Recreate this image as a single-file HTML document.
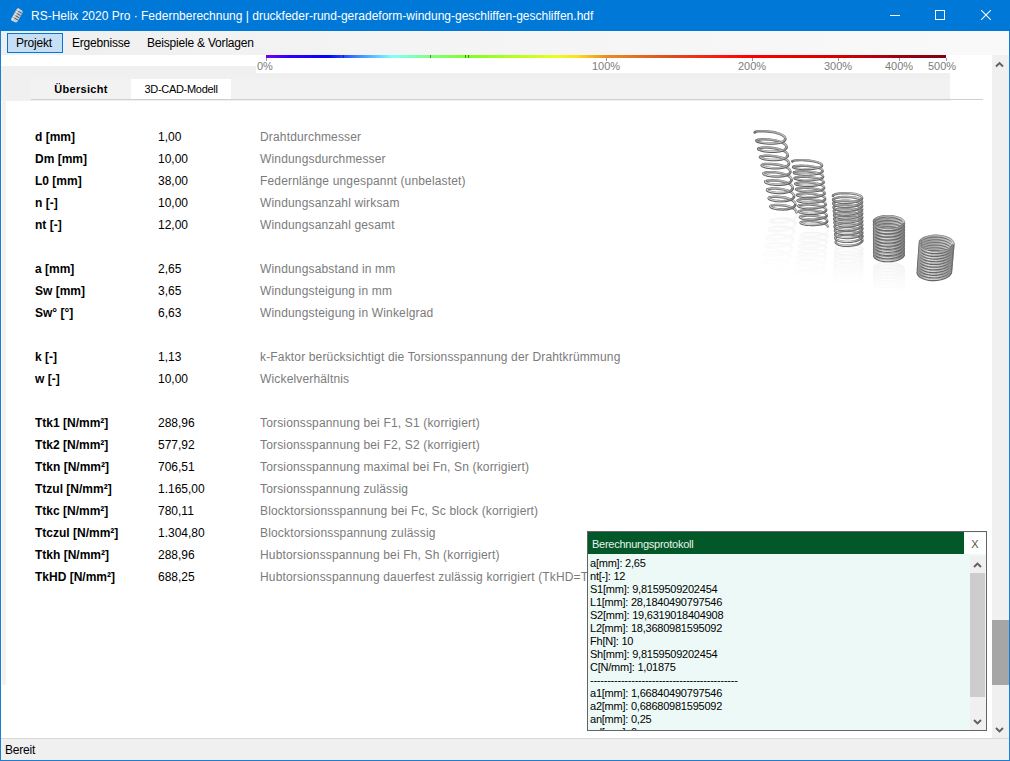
<!DOCTYPE html>
<html><head><meta charset="utf-8">
<style>
*{margin:0;padding:0;box-sizing:border-box}
html,body{width:1010px;height:761px;overflow:hidden;background:#fff;font-family:"Liberation Sans",sans-serif}
.a{position:absolute}
#title{left:0;top:0;width:1010px;height:31px;background:#0078d7;color:#fff;font-size:12px}
#title .t{left:31px;top:9px;white-space:nowrap;line-height:15px}
.menu{position:absolute;top:35px;font-size:12px;line-height:16px;white-space:nowrap;color:#000;letter-spacing:-0.2px}
.tab{position:absolute;top:79px;height:20px;font-size:11px;line-height:20px;text-align:center;white-space:nowrap;color:#000}
.r{position:absolute;font-size:12px;line-height:16px;white-space:nowrap}
.k{left:35px;font-weight:bold;color:#000}
.v{left:158px;color:#000}
.d{left:260px;color:#7b7b7b;letter-spacing:0.16px}
.lbl{position:absolute;top:60px;font-size:11px;line-height:13px;color:#7d7d7d;white-space:nowrap}
.tick{position:absolute;top:58px;width:1px;height:3px;background:#9a9a9a}
.btick{position:absolute;top:55px;width:1px;height:3px;background:rgba(0,0,0,.45)}
#proto{left:587px;top:531px;width:400px;height:200px;border:1px solid #646464;background:#edf9f6}
#ph{left:0;top:0;width:376px;height:22px;background:#03582a;color:#e8f4e8;font-size:11px;line-height:22px;padding-left:4px;padding-top:1px;letter-spacing:-0.25px}
#px{left:376px;top:1px;width:22px;height:21px;background:#fff;color:#555;font-size:11px;line-height:22px;text-align:center}
#pt{left:2px;top:25px;width:370px;height:173px;overflow:hidden;font-size:11px;line-height:13px;color:#000;letter-spacing:-0.23px}
#psb{left:382px;top:24px;width:15px;height:174px;background:#f0f0f0}
#status{left:1px;top:738px;width:1008px;height:22px;background:#f0f0f0;border-top:1px solid #d9d9d9}
.chev{position:absolute}
</style></head><body>
<div class="a" style="left:0;top:0;width:1010px;height:761px;border:1px solid #1a7fd4;border-top:none"></div>
<div id="title" class="a">
 <svg class="a" style="left:9px;top:7px" width="16" height="17" viewBox="0 0 16 17">
  <g transform="rotate(30 8 8.5)">
   <rect x="4.5" y="1.5" width="7" height="14" rx="2.5" fill="#c8ccd2"/>
   <path d="M4.8 4.2h6.4M4.8 6.8h6.4M4.8 9.4h6.4M4.8 12h6.4" stroke="#4a5a70" stroke-width="1"/>
   <rect x="5" y="1.5" width="2" height="14" fill="#eef0f4" opacity=".6"/>
  </g>
 </svg>
 <div class="t a">RS-Helix 2020 Pro · Federnberechnung | druckfeder-rund-geradeform-windung-geschliffen-geschliffen.hdf</div>
 <div class="a" style="left:890px;top:15px;width:10px;height:1px;background:#fff"></div>
 <div class="a" style="left:935px;top:10px;width:10px;height:10px;border:1px solid #fff"></div>
 <svg class="a" style="left:981px;top:10px" width="10" height="10" viewBox="0 0 10 10"><path d="M0 0L10 10M10 0L0 10" stroke="#fff" stroke-width="1.05"/></svg>
</div>
<div class="a" style="left:1px;top:31px;width:1008px;height:24px;background:linear-gradient(to right,#efefef,#f4f4f4 40%,#f9f9f9)"></div>
<div class="a" style="left:7px;top:33px;width:56px;height:20px;background:#c6dff5;border:1px solid #0078d7"></div>
<div class="menu" style="left:16px">Projekt</div>
<div class="menu" style="left:72px">Ergebnisse</div>
<div class="menu" style="left:147px">Beispiele &amp; Vorlagen</div>

<div class="a" style="left:1px;top:66px;width:949px;height:35px;background:#f0f0f0"></div>
<div class="a" style="left:31px;top:79px;width:919px;height:20px;background:#f2f2f2"></div>
<div class="a" style="left:256px;top:55px;width:700px;height:18px;background:#fff"></div>
<div class="a" style="left:2px;top:101px;width:4px;height:584px;background:#f2f2f2"></div>
<div class="tab" style="left:31px;width:100px;font-weight:bold;letter-spacing:0.28px">Übersicht</div>
<div class="tab" style="left:131px;width:100px;background:#fff;letter-spacing:-0.3px">3D-CAD-Modell</div>
<div class="a" style="left:31px;top:99px;width:952px;height:1px;background:#cfcfcf"></div>

<div class="a" style="left:266px;top:55px;width:680px;height:3px;background:linear-gradient(to right,#7a00e6 0px,#3300ff 20px,#0000ff 62px,#4080ff 90px,#80ffff 126px,#80ff80 164px,#80ff20 204px,#e8ff20 290px,#ffe020 310px,#e89020 340px,#e05020 400px,#ff1010 460px,#ff0000 486px,#d80000 572px,#a00010 633px,#800010 680px)"></div>
<div class="btick" style="left:343px"></div>
<div class="btick" style="left:430px"></div>
<div class="btick" style="left:465px"></div>
<div class="btick" style="left:468px"></div>
<div class="tick" style="left:266px"></div>
<div class="tick" style="left:606px"></div>
<div class="tick" style="left:752px"></div>
<div class="tick" style="left:838px"></div>
<div class="tick" style="left:899px"></div>
<div class="tick" style="left:946px"></div>
<div class="lbl" style="left:257px">0%</div>
<div class="lbl" style="left:592px">100%</div>
<div class="lbl" style="left:738px">200%</div>
<div class="lbl" style="left:824px">300%</div>
<div class="lbl" style="left:885px">400%</div>
<div class="lbl" style="left:928px">500%</div>

<div class="r k" style="top:129px">d [mm]</div><div class="r v" style="top:129px">1,00</div><div class="r d" style="top:129px">Drahtdurchmesser</div><div class="r k" style="top:151px">Dm [mm]</div><div class="r v" style="top:151px">10,00</div><div class="r d" style="top:151px">Windungsdurchmesser</div><div class="r k" style="top:173px">L0 [mm]</div><div class="r v" style="top:173px">38,00</div><div class="r d" style="top:173px">Federnlänge ungespannt (unbelastet)</div><div class="r k" style="top:195px">n [-]</div><div class="r v" style="top:195px">10,00</div><div class="r d" style="top:195px">Windungsanzahl wirksam</div><div class="r k" style="top:217px">nt [-]</div><div class="r v" style="top:217px">12,00</div><div class="r d" style="top:217px">Windungsanzahl gesamt</div><div class="r k" style="top:261px">a [mm]</div><div class="r v" style="top:261px">2,65</div><div class="r d" style="top:261px">Windungsabstand in mm</div><div class="r k" style="top:283px">Sw [mm]</div><div class="r v" style="top:283px">3,65</div><div class="r d" style="top:283px">Windungsteigung in mm</div><div class="r k" style="top:305px">Sw° [°]</div><div class="r v" style="top:305px">6,63</div><div class="r d" style="top:305px">Windungsteigung in Winkelgrad</div><div class="r k" style="top:349px">k [-]</div><div class="r v" style="top:349px">1,13</div><div class="r d" style="top:349px">k-Faktor berücksichtigt die Torsionsspannung der Drahtkrümmung</div><div class="r k" style="top:371px">w [-]</div><div class="r v" style="top:371px">10,00</div><div class="r d" style="top:371px">Wickelverhältnis</div><div class="r k" style="top:415px">Ttk1 [N/mm²]</div><div class="r v" style="top:415px">288,96</div><div class="r d" style="top:415px">Torsionsspannung bei F1, S1 (korrigiert)</div><div class="r k" style="top:437px">Ttk2 [N/mm²]</div><div class="r v" style="top:437px">577,92</div><div class="r d" style="top:437px">Torsionsspannung bei F2, S2 (korrigiert)</div><div class="r k" style="top:459px">Ttkn [N/mm²]</div><div class="r v" style="top:459px">706,51</div><div class="r d" style="top:459px">Torsionsspannung maximal bei Fn, Sn (korrigiert)</div><div class="r k" style="top:481px">Ttzul [N/mm²]</div><div class="r v" style="top:481px">1.165,00</div><div class="r d" style="top:481px">Torsionsspannung zulässig</div><div class="r k" style="top:503px">Ttkc [N/mm²]</div><div class="r v" style="top:503px">780,11</div><div class="r d" style="top:503px">Blocktorsionsspannung bei Fc, Sc block (korrigiert)</div><div class="r k" style="top:525px">Ttczul [N/mm²]</div><div class="r v" style="top:525px">1.304,80</div><div class="r d" style="top:525px">Blocktorsionsspannung zulässig</div><div class="r k" style="top:547px">Ttkh [N/mm²]</div><div class="r v" style="top:547px">288,96</div><div class="r d" style="top:547px">Hubtorsionsspannung bei Fh, Sh (korrigiert)</div><div class="r k" style="top:569px">TkHD [N/mm²]</div><div class="r v" style="top:569px">688,25</div><div class="r d" style="top:569px">Hubtorsionsspannung dauerfest zulässig korrigiert (TkHD=TkH*bl)</div>

<svg class="a" style="left:740px;top:115px" width="230" height="180" viewBox="0 0 230 180"><defs><linearGradient id="gf" x1="0" y1="0" x2="1" y2="0"><stop offset="0" stop-color="#8e8e8e"/><stop offset=".3" stop-color="#dcdcdc"/><stop offset=".6" stop-color="#c4c4c4"/><stop offset="1" stop-color="#808080"/></linearGradient><linearGradient id="gb" x1="0" y1="0" x2="1" y2="0"><stop offset="0" stop-color="#9a9a9a"/><stop offset=".5" stop-color="#b0b0b0"/><stop offset="1" stop-color="#d0d0d0"/></linearGradient><linearGradient id="fg" x1="0" y1="0" x2="0" y2="1"><stop offset="0" stop-color="#fff" stop-opacity="1"/><stop offset="1" stop-color="#fff" stop-opacity="0"/></linearGradient><mask id="m0" maskUnits="userSpaceOnUse" x="0" y="99" width="230" height="60"><rect x="0" y="99" width="230" height="60" fill="url(#fg)"/></mask><mask id="m1" maskUnits="userSpaceOnUse" x="0" y="114" width="230" height="50"><rect x="0" y="114" width="230" height="50" fill="url(#fg)"/></mask><mask id="m2" maskUnits="userSpaceOnUse" x="0" y="130" width="230" height="40"><rect x="0" y="130" width="230" height="40" fill="url(#fg)"/></mask><mask id="m3" maskUnits="userSpaceOnUse" x="0" y="147" width="230" height="30"><rect x="0" y="147" width="230" height="30" fill="url(#fg)"/></mask><mask id="m4" maskUnits="userSpaceOnUse" x="0" y="166" width="230" height="0"><rect x="0" y="166" width="230" height="0" fill="url(#fg)"/></mask></defs><g mask="url(#m0)" opacity=".09"><g transform="translate(0 198) scale(1 -1)"><path d="M15.00 17.07 L15.70 16.74 L16.84 16.47 L18.37 16.27 L20.24 16.16 L22.41 16.13 L24.80 16.21 L27.35 16.39 L29.97 16.68 L32.60 17.08 L35.15 17.59 L37.54 18.21 L39.71 18.94 L41.59 19.76 L43.13 20.67 L44.28 21.63 L45.01 22.64 L45.29 23.64 L45.12 24.62 M16.75 25.30 L17.45 24.96 L18.56 24.68 L20.07 24.48 L21.91 24.36 L24.04 24.34 L26.39 24.41 L28.90 24.58 L31.48 24.87 L34.06 25.27 L36.57 25.78 L38.92 26.40 L41.05 27.12 L42.90 27.94 L44.42 28.85 L45.55 29.82 L46.26 30.83 L46.54 31.84 L46.38 32.81 M18.50 33.52 L19.19 33.18 L20.29 32.90 L21.77 32.69 L23.58 32.57 L25.67 32.54 L27.99 32.60 L30.45 32.78 L32.99 33.06 L35.52 33.45 L37.99 33.96 L40.30 34.58 L42.40 35.30 L44.22 36.13 L45.70 37.04 L46.82 38.01 L47.52 39.02 L47.80 40.03 L47.64 41.01 M20.26 41.74 L20.93 41.40 L22.01 41.11 L23.47 40.90 L25.25 40.77 L27.31 40.74 L29.58 40.80 L32.00 40.97 L34.49 41.25 L36.99 41.64 L39.41 42.15 L41.68 42.76 L43.74 43.49 L45.53 44.31 L46.99 45.22 L48.09 46.19 L48.78 47.21 L49.05 48.22 L48.89 49.21 M22.01 49.97 L22.68 49.62 L23.74 49.33 L25.17 49.11 L26.92 48.98 L28.94 48.94 L31.17 49.00 L33.55 49.16 L36.00 49.44 L38.45 49.83 L40.83 50.33 L43.06 50.95 L45.09 51.67 L46.84 52.50 L48.28 53.41 L49.35 54.38 L50.04 55.39 L50.30 56.41 L50.15 57.41 M23.77 58.19 L24.42 57.84 L25.46 57.54 L26.86 57.32 L28.58 57.19 L30.57 57.14 L32.77 57.19 L35.10 57.36 L37.51 57.63 L39.91 58.01 L42.25 58.51 L44.44 59.13 L46.43 59.85 L48.16 60.68 L49.57 61.59 L50.62 62.57 L51.29 63.58 L51.56 64.61 L51.41 65.60 M25.52 66.42 L26.16 66.06 L27.19 65.76 L28.56 65.53 L30.25 65.39 L32.20 65.34 L34.36 65.39 L36.65 65.55 L39.01 65.82 L41.38 66.20 L43.67 66.70 L45.82 67.31 L47.78 68.04 L49.47 68.86 L50.86 69.78 L51.89 70.75 L52.55 71.77 L52.81 72.80 L52.66 73.80 M27.27 74.64 L27.90 74.28 L28.91 73.98 L30.26 73.74 L31.92 73.60 L33.84 73.54 L35.95 73.59 L38.20 73.74 L40.52 74.01 L42.84 74.39 L45.09 74.88 L47.20 75.50 L49.12 76.22 L50.78 77.05 L52.14 77.96 L53.16 78.94 L53.81 79.96 L54.06 80.99 L53.92 82.00 M29.03 82.87 L29.65 82.50 L30.63 82.19 L31.96 81.95 L33.59 81.80 L35.47 81.74 L37.54 81.78 L39.75 81.93 L42.03 82.20 L44.30 82.57 L46.51 83.07 L48.58 83.68 L50.46 84.40 L52.10 85.23 L53.43 86.14 L54.43 87.13 L55.06 88.15 L55.32 89.19 L55.18 90.19 M30.78 91.09 L31.39 90.72 L32.36 90.41 L33.66 90.17 L35.26 90.01 L37.10 89.94 L39.14 89.98 L41.30 90.13 L43.53 90.39 L45.76 90.76 L47.93 91.25 L49.96 91.86 L51.81 92.59 L53.41 93.41 L54.72 94.33 L55.70 95.32 L56.32 96.34 L56.57 97.38" fill="none" stroke="#747474" stroke-width="2.5" stroke-linecap="round"/><path d="M15.00 17.07 L15.70 16.74 L16.84 16.47 L18.37 16.27 L20.24 16.16 L22.41 16.13 L24.80 16.21 L27.35 16.39 L29.97 16.68 L32.60 17.08 L35.15 17.59 L37.54 18.21 L39.71 18.94 L41.59 19.76 L43.13 20.67 L44.28 21.63 L45.01 22.64 L45.29 23.64 L45.12 24.62 M16.75 25.30 L17.45 24.96 L18.56 24.68 L20.07 24.48 L21.91 24.36 L24.04 24.34 L26.39 24.41 L28.90 24.58 L31.48 24.87 L34.06 25.27 L36.57 25.78 L38.92 26.40 L41.05 27.12 L42.90 27.94 L44.42 28.85 L45.55 29.82 L46.26 30.83 L46.54 31.84 L46.38 32.81 M18.50 33.52 L19.19 33.18 L20.29 32.90 L21.77 32.69 L23.58 32.57 L25.67 32.54 L27.99 32.60 L30.45 32.78 L32.99 33.06 L35.52 33.45 L37.99 33.96 L40.30 34.58 L42.40 35.30 L44.22 36.13 L45.70 37.04 L46.82 38.01 L47.52 39.02 L47.80 40.03 L47.64 41.01 M20.26 41.74 L20.93 41.40 L22.01 41.11 L23.47 40.90 L25.25 40.77 L27.31 40.74 L29.58 40.80 L32.00 40.97 L34.49 41.25 L36.99 41.64 L39.41 42.15 L41.68 42.76 L43.74 43.49 L45.53 44.31 L46.99 45.22 L48.09 46.19 L48.78 47.21 L49.05 48.22 L48.89 49.21 M22.01 49.97 L22.68 49.62 L23.74 49.33 L25.17 49.11 L26.92 48.98 L28.94 48.94 L31.17 49.00 L33.55 49.16 L36.00 49.44 L38.45 49.83 L40.83 50.33 L43.06 50.95 L45.09 51.67 L46.84 52.50 L48.28 53.41 L49.35 54.38 L50.04 55.39 L50.30 56.41 L50.15 57.41 M23.77 58.19 L24.42 57.84 L25.46 57.54 L26.86 57.32 L28.58 57.19 L30.57 57.14 L32.77 57.19 L35.10 57.36 L37.51 57.63 L39.91 58.01 L42.25 58.51 L44.44 59.13 L46.43 59.85 L48.16 60.68 L49.57 61.59 L50.62 62.57 L51.29 63.58 L51.56 64.61 L51.41 65.60 M25.52 66.42 L26.16 66.06 L27.19 65.76 L28.56 65.53 L30.25 65.39 L32.20 65.34 L34.36 65.39 L36.65 65.55 L39.01 65.82 L41.38 66.20 L43.67 66.70 L45.82 67.31 L47.78 68.04 L49.47 68.86 L50.86 69.78 L51.89 70.75 L52.55 71.77 L52.81 72.80 L52.66 73.80 M27.27 74.64 L27.90 74.28 L28.91 73.98 L30.26 73.74 L31.92 73.60 L33.84 73.54 L35.95 73.59 L38.20 73.74 L40.52 74.01 L42.84 74.39 L45.09 74.88 L47.20 75.50 L49.12 76.22 L50.78 77.05 L52.14 77.96 L53.16 78.94 L53.81 79.96 L54.06 80.99 L53.92 82.00 M29.03 82.87 L29.65 82.50 L30.63 82.19 L31.96 81.95 L33.59 81.80 L35.47 81.74 L37.54 81.78 L39.75 81.93 L42.03 82.20 L44.30 82.57 L46.51 83.07 L48.58 83.68 L50.46 84.40 L52.10 85.23 L53.43 86.14 L54.43 87.13 L55.06 88.15 L55.32 89.19 L55.18 90.19 M30.78 91.09 L31.39 90.72 L32.36 90.41 L33.66 90.17 L35.26 90.01 L37.10 89.94 L39.14 89.98 L41.30 90.13 L43.53 90.39 L45.76 90.76 L47.93 91.25 L49.96 91.86 L51.81 92.59 L53.41 93.41 L54.72 94.33 L55.70 95.32 L56.32 96.34 L56.57 97.38" fill="none" stroke="url(#gb)" stroke-width="1.25" stroke-linecap="round" transform="translate(0 -0.3)"/><path d="M14.74 17.45 L15.00 17.07 M45.12 24.62 L44.51 25.53 L43.48 26.35 L42.05 27.05 L40.27 27.62 L38.20 28.05 L35.91 28.34 L33.46 28.51 L30.93 28.55 L28.40 28.48 L25.95 28.31 L23.66 28.06 L21.59 27.74 L19.80 27.36 L18.37 26.96 L17.31 26.53 L16.68 26.10 L16.49 25.68 L16.75 25.30 M46.38 32.81 L45.78 33.73 L44.76 34.55 L43.36 35.26 L41.61 35.83 L39.58 36.27 L37.33 36.57 L34.92 36.74 L32.43 36.78 L29.95 36.71 L27.54 36.54 L25.29 36.29 L23.25 35.97 L21.50 35.60 L20.09 35.19 L19.06 34.76 L18.44 34.33 L18.25 33.91 L18.50 33.52 M47.64 41.01 L47.05 41.93 L46.05 42.76 L44.67 43.47 L42.95 44.05 L40.96 44.49 L38.74 44.79 L36.38 44.96 L33.94 45.01 L31.50 44.95 L29.13 44.78 L26.92 44.53 L24.92 44.21 L23.20 43.84 L21.81 43.43 L20.80 43.00 L20.19 42.56 L20.01 42.14 L20.26 41.74 M48.89 49.21 L48.32 50.13 L47.33 50.96 L45.98 51.68 L44.30 52.26 L42.34 52.71 L40.16 53.02 L37.84 53.19 L35.44 53.24 L33.05 53.18 L30.72 53.02 L28.55 52.77 L26.58 52.45 L24.90 52.08 L23.53 51.66 L22.54 51.23 L21.94 50.79 L21.77 50.37 L22.01 49.97 M50.15 57.41 L49.58 58.33 L48.62 59.17 L47.29 59.89 L45.64 60.48 L43.71 60.93 L41.58 61.24 L39.30 61.42 L36.95 61.47 L34.59 61.41 L32.31 61.25 L30.18 61.01 L28.25 60.69 L26.59 60.31 L25.26 59.90 L24.28 59.47 L23.70 59.03 L23.52 58.59 L23.77 58.19 M51.41 65.60 L50.85 66.53 L49.91 67.37 L48.60 68.10 L46.98 68.69 L45.09 69.15 L43.00 69.47 L40.76 69.65 L38.45 69.71 L36.14 69.65 L33.90 69.49 L31.81 69.24 L29.92 68.93 L28.29 68.55 L26.98 68.14 L26.02 67.70 L25.45 67.26 L25.28 66.82 L25.52 66.42 M52.66 73.80 L52.12 74.74 L51.19 75.58 L49.91 76.31 L48.32 76.91 L46.47 77.37 L44.41 77.69 L42.22 77.88 L39.95 77.94 L37.69 77.88 L35.49 77.73 L33.44 77.48 L31.58 77.16 L29.99 76.79 L28.70 76.37 L27.76 75.93 L27.20 75.49 L27.04 75.05 L27.27 74.64 M53.92 82.00 L53.39 82.94 L52.48 83.79 L51.22 84.52 L49.66 85.12 L47.85 85.59 L45.83 85.91 L43.68 86.11 L41.46 86.17 L39.24 86.12 L37.08 85.96 L35.07 85.72 L33.25 85.40 L31.69 85.03 L30.42 84.61 L29.51 84.17 L28.96 83.72 L28.79 83.28 L29.03 82.87 M55.18 90.19 L54.66 91.14 L53.77 91.99 L52.54 92.73 L51.01 93.34 L49.23 93.81 L47.25 94.14 L45.14 94.33 L42.96 94.40 L40.78 94.35 L38.67 94.20 L36.70 93.96 L34.92 93.64 L33.38 93.26 L32.15 92.85 L31.25 92.40 L30.71 91.95 L30.55 91.51 L30.78 91.09" fill="none" stroke="#5e5e5e" stroke-width="2.5" stroke-linecap="round"/><path d="M14.74 17.45 L15.00 17.07 M45.12 24.62 L44.51 25.53 L43.48 26.35 L42.05 27.05 L40.27 27.62 L38.20 28.05 L35.91 28.34 L33.46 28.51 L30.93 28.55 L28.40 28.48 L25.95 28.31 L23.66 28.06 L21.59 27.74 L19.80 27.36 L18.37 26.96 L17.31 26.53 L16.68 26.10 L16.49 25.68 L16.75 25.30 M46.38 32.81 L45.78 33.73 L44.76 34.55 L43.36 35.26 L41.61 35.83 L39.58 36.27 L37.33 36.57 L34.92 36.74 L32.43 36.78 L29.95 36.71 L27.54 36.54 L25.29 36.29 L23.25 35.97 L21.50 35.60 L20.09 35.19 L19.06 34.76 L18.44 34.33 L18.25 33.91 L18.50 33.52 M47.64 41.01 L47.05 41.93 L46.05 42.76 L44.67 43.47 L42.95 44.05 L40.96 44.49 L38.74 44.79 L36.38 44.96 L33.94 45.01 L31.50 44.95 L29.13 44.78 L26.92 44.53 L24.92 44.21 L23.20 43.84 L21.81 43.43 L20.80 43.00 L20.19 42.56 L20.01 42.14 L20.26 41.74 M48.89 49.21 L48.32 50.13 L47.33 50.96 L45.98 51.68 L44.30 52.26 L42.34 52.71 L40.16 53.02 L37.84 53.19 L35.44 53.24 L33.05 53.18 L30.72 53.02 L28.55 52.77 L26.58 52.45 L24.90 52.08 L23.53 51.66 L22.54 51.23 L21.94 50.79 L21.77 50.37 L22.01 49.97 M50.15 57.41 L49.58 58.33 L48.62 59.17 L47.29 59.89 L45.64 60.48 L43.71 60.93 L41.58 61.24 L39.30 61.42 L36.95 61.47 L34.59 61.41 L32.31 61.25 L30.18 61.01 L28.25 60.69 L26.59 60.31 L25.26 59.90 L24.28 59.47 L23.70 59.03 L23.52 58.59 L23.77 58.19 M51.41 65.60 L50.85 66.53 L49.91 67.37 L48.60 68.10 L46.98 68.69 L45.09 69.15 L43.00 69.47 L40.76 69.65 L38.45 69.71 L36.14 69.65 L33.90 69.49 L31.81 69.24 L29.92 68.93 L28.29 68.55 L26.98 68.14 L26.02 67.70 L25.45 67.26 L25.28 66.82 L25.52 66.42 M52.66 73.80 L52.12 74.74 L51.19 75.58 L49.91 76.31 L48.32 76.91 L46.47 77.37 L44.41 77.69 L42.22 77.88 L39.95 77.94 L37.69 77.88 L35.49 77.73 L33.44 77.48 L31.58 77.16 L29.99 76.79 L28.70 76.37 L27.76 75.93 L27.20 75.49 L27.04 75.05 L27.27 74.64 M53.92 82.00 L53.39 82.94 L52.48 83.79 L51.22 84.52 L49.66 85.12 L47.85 85.59 L45.83 85.91 L43.68 86.11 L41.46 86.17 L39.24 86.12 L37.08 85.96 L35.07 85.72 L33.25 85.40 L31.69 85.03 L30.42 84.61 L29.51 84.17 L28.96 83.72 L28.79 83.28 L29.03 82.87 M55.18 90.19 L54.66 91.14 L53.77 91.99 L52.54 92.73 L51.01 93.34 L49.23 93.81 L47.25 94.14 L45.14 94.33 L42.96 94.40 L40.78 94.35 L38.67 94.20 L36.70 93.96 L34.92 93.64 L33.38 93.26 L32.15 92.85 L31.25 92.40 L30.71 91.95 L30.55 91.51 L30.78 91.09" fill="none" stroke="url(#gf)" stroke-width="1.25" stroke-linecap="round" transform="translate(0 -0.35)"/></g></g><g mask="url(#m1)" opacity=".09"><g transform="translate(0 228) scale(1 -1)"><path d="M52.55 46.15 L53.23 45.85 L54.34 45.60 L55.84 45.40 L57.67 45.26 L59.80 45.19 L62.15 45.21 L64.66 45.30 L67.24 45.48 L69.82 45.75 L72.32 46.10 L74.67 46.54 L76.80 47.04 L78.63 47.62 L80.12 48.25 L81.23 48.91 L81.91 49.60 L82.15 50.30 L81.94 50.98 M53.30 51.72 L53.98 51.41 L55.08 51.15 L56.56 50.95 L58.39 50.81 L60.50 50.74 L62.83 50.75 L65.31 50.84 L67.88 51.02 L70.44 51.29 L72.92 51.64 L75.25 52.08 L77.35 52.59 L79.17 53.16 L80.65 53.80 L81.75 54.47 L82.42 55.16 L82.66 55.86 L82.46 56.54 M54.06 57.28 L54.73 56.97 L55.82 56.71 L57.29 56.50 L59.10 56.36 L61.19 56.28 L63.51 56.29 L65.97 56.38 L68.51 56.56 L71.05 56.83 L73.51 57.18 L75.82 57.62 L77.91 58.13 L79.72 58.71 L81.18 59.34 L82.27 60.02 L82.94 60.72 L83.17 61.42 L82.97 62.11 M54.81 62.85 L55.48 62.53 L56.56 62.27 L58.02 62.05 L59.82 61.90 L61.89 61.83 L64.19 61.83 L66.63 61.92 L69.15 62.10 L71.66 62.37 L74.11 62.72 L76.40 63.16 L78.47 63.67 L80.26 64.25 L81.71 64.89 L82.79 65.57 L83.45 66.27 L83.69 66.98 L83.48 67.67 M55.57 68.41 L56.23 68.09 L57.30 67.82 L58.75 67.60 L60.53 67.45 L62.59 67.37 L64.86 67.38 L67.29 67.46 L69.78 67.64 L72.28 67.91 L74.70 68.26 L76.97 68.70 L79.03 69.21 L80.80 69.80 L82.24 70.44 L83.31 71.12 L83.97 71.83 L84.20 72.54 L84.00 73.24 M56.32 73.98 L56.98 73.65 L58.04 73.38 L59.48 73.16 L61.24 73.00 L63.28 72.92 L65.54 72.92 L67.94 73.00 L70.42 73.18 L72.89 73.44 L75.29 73.80 L77.55 74.24 L79.58 74.76 L81.34 75.35 L82.77 75.99 L83.83 76.68 L84.48 77.39 L84.71 78.10 L84.51 78.80 M56.85 79.90 L57.08 79.54 L57.73 79.22 L58.78 78.93 L60.21 78.71 L61.96 78.55 L63.98 78.46 L66.22 78.46 L68.60 78.54 L71.05 78.72 L73.51 78.98 L75.89 79.34 L78.12 79.78 L80.14 80.30 L81.88 80.89 L83.30 81.54 L84.35 82.23 L85.00 82.94 L85.23 83.66 L85.03 84.37 M57.83 85.11 L58.48 84.78 L59.52 84.49 L60.94 84.26 L62.67 84.10 L64.68 84.01 L66.89 84.00 L69.26 84.08 L71.69 84.26 L74.12 84.52 L76.48 84.88 L78.70 85.32 L80.70 85.84 L82.43 86.44 L83.83 87.09 L84.87 87.78 L85.51 88.50 L85.74 89.22 L85.54 89.93 M58.59 90.67 L59.23 90.34 L60.26 90.05 L61.66 89.81 L63.38 89.64 L65.37 89.55 L67.57 89.54 L69.91 89.62 L72.33 89.80 L74.74 90.06 L77.08 90.42 L79.27 90.86 L81.25 91.38 L82.97 91.98 L84.36 92.63 L85.39 93.33 L86.03 94.06 L86.25 94.78 L86.06 95.50 M59.34 96.24 L59.98 95.90 L61.01 95.60 L62.39 95.36 L64.10 95.19 L66.07 95.10 L68.25 95.09 L70.57 95.16 L72.96 95.34 L75.35 95.60 L77.67 95.96 L79.85 96.40 L81.81 96.93 L83.51 97.53 L84.89 98.18 L85.91 98.88 L86.54 99.61 L86.77 100.35 L86.57 101.07 M60.10 101.80 L60.73 101.46 L61.75 101.16 L63.12 100.91 L64.81 100.74 L66.77 100.64 L68.93 100.63 L71.23 100.70 L73.60 100.87 L75.97 101.14 L78.26 101.50 L80.42 101.94 L82.37 102.47 L84.05 103.07 L85.42 103.73 L86.43 104.44 L87.06 105.17 L87.28 105.91 L87.09 106.63 M60.85 107.37 L61.48 107.02 L62.49 106.71 L63.85 106.47 L65.52 106.29 L67.46 106.19 L69.60 106.17 L71.88 106.25 L74.23 106.41 L76.58 106.68 L78.86 107.03 L80.99 107.48 L82.93 108.01 L84.60 108.62 L85.95 109.28 L86.95 109.99 L87.57 110.73 L87.79 111.47" fill="none" stroke="#747474" stroke-width="2.3" stroke-linecap="round"/><path d="M52.55 46.15 L53.23 45.85 L54.34 45.60 L55.84 45.40 L57.67 45.26 L59.80 45.19 L62.15 45.21 L64.66 45.30 L67.24 45.48 L69.82 45.75 L72.32 46.10 L74.67 46.54 L76.80 47.04 L78.63 47.62 L80.12 48.25 L81.23 48.91 L81.91 49.60 L82.15 50.30 L81.94 50.98 M53.30 51.72 L53.98 51.41 L55.08 51.15 L56.56 50.95 L58.39 50.81 L60.50 50.74 L62.83 50.75 L65.31 50.84 L67.88 51.02 L70.44 51.29 L72.92 51.64 L75.25 52.08 L77.35 52.59 L79.17 53.16 L80.65 53.80 L81.75 54.47 L82.42 55.16 L82.66 55.86 L82.46 56.54 M54.06 57.28 L54.73 56.97 L55.82 56.71 L57.29 56.50 L59.10 56.36 L61.19 56.28 L63.51 56.29 L65.97 56.38 L68.51 56.56 L71.05 56.83 L73.51 57.18 L75.82 57.62 L77.91 58.13 L79.72 58.71 L81.18 59.34 L82.27 60.02 L82.94 60.72 L83.17 61.42 L82.97 62.11 M54.81 62.85 L55.48 62.53 L56.56 62.27 L58.02 62.05 L59.82 61.90 L61.89 61.83 L64.19 61.83 L66.63 61.92 L69.15 62.10 L71.66 62.37 L74.11 62.72 L76.40 63.16 L78.47 63.67 L80.26 64.25 L81.71 64.89 L82.79 65.57 L83.45 66.27 L83.69 66.98 L83.48 67.67 M55.57 68.41 L56.23 68.09 L57.30 67.82 L58.75 67.60 L60.53 67.45 L62.59 67.37 L64.86 67.38 L67.29 67.46 L69.78 67.64 L72.28 67.91 L74.70 68.26 L76.97 68.70 L79.03 69.21 L80.80 69.80 L82.24 70.44 L83.31 71.12 L83.97 71.83 L84.20 72.54 L84.00 73.24 M56.32 73.98 L56.98 73.65 L58.04 73.38 L59.48 73.16 L61.24 73.00 L63.28 72.92 L65.54 72.92 L67.94 73.00 L70.42 73.18 L72.89 73.44 L75.29 73.80 L77.55 74.24 L79.58 74.76 L81.34 75.35 L82.77 75.99 L83.83 76.68 L84.48 77.39 L84.71 78.10 L84.51 78.80 M56.85 79.90 L57.08 79.54 L57.73 79.22 L58.78 78.93 L60.21 78.71 L61.96 78.55 L63.98 78.46 L66.22 78.46 L68.60 78.54 L71.05 78.72 L73.51 78.98 L75.89 79.34 L78.12 79.78 L80.14 80.30 L81.88 80.89 L83.30 81.54 L84.35 82.23 L85.00 82.94 L85.23 83.66 L85.03 84.37 M57.83 85.11 L58.48 84.78 L59.52 84.49 L60.94 84.26 L62.67 84.10 L64.68 84.01 L66.89 84.00 L69.26 84.08 L71.69 84.26 L74.12 84.52 L76.48 84.88 L78.70 85.32 L80.70 85.84 L82.43 86.44 L83.83 87.09 L84.87 87.78 L85.51 88.50 L85.74 89.22 L85.54 89.93 M58.59 90.67 L59.23 90.34 L60.26 90.05 L61.66 89.81 L63.38 89.64 L65.37 89.55 L67.57 89.54 L69.91 89.62 L72.33 89.80 L74.74 90.06 L77.08 90.42 L79.27 90.86 L81.25 91.38 L82.97 91.98 L84.36 92.63 L85.39 93.33 L86.03 94.06 L86.25 94.78 L86.06 95.50 M59.34 96.24 L59.98 95.90 L61.01 95.60 L62.39 95.36 L64.10 95.19 L66.07 95.10 L68.25 95.09 L70.57 95.16 L72.96 95.34 L75.35 95.60 L77.67 95.96 L79.85 96.40 L81.81 96.93 L83.51 97.53 L84.89 98.18 L85.91 98.88 L86.54 99.61 L86.77 100.35 L86.57 101.07 M60.10 101.80 L60.73 101.46 L61.75 101.16 L63.12 100.91 L64.81 100.74 L66.77 100.64 L68.93 100.63 L71.23 100.70 L73.60 100.87 L75.97 101.14 L78.26 101.50 L80.42 101.94 L82.37 102.47 L84.05 103.07 L85.42 103.73 L86.43 104.44 L87.06 105.17 L87.28 105.91 L87.09 106.63 M60.85 107.37 L61.48 107.02 L62.49 106.71 L63.85 106.47 L65.52 106.29 L67.46 106.19 L69.60 106.17 L71.88 106.25 L74.23 106.41 L76.58 106.68 L78.86 107.03 L80.99 107.48 L82.93 108.01 L84.60 108.62 L85.95 109.28 L86.95 109.99 L87.57 110.73 L87.79 111.47" fill="none" stroke="url(#gb)" stroke-width="1.15" stroke-linecap="round" transform="translate(0 -0.3)"/><path d="M52.31 46.48 L52.55 46.15 M81.94 50.98 L81.29 51.62 L80.23 52.21 L78.77 52.74 L76.97 53.19 L74.89 53.56 L72.59 53.83 L70.13 54.01 L67.59 54.10 L65.06 54.11 L62.60 54.03 L60.30 53.88 L58.22 53.66 L56.43 53.40 L54.98 53.09 L53.92 52.75 L53.27 52.40 L53.07 52.05 L53.30 51.72 M82.46 56.54 L81.81 57.19 L80.75 57.79 L79.31 58.32 L77.53 58.77 L75.47 59.14 L73.18 59.42 L70.74 59.60 L68.23 59.69 L65.72 59.70 L63.28 59.62 L61.00 59.47 L58.94 59.25 L57.16 58.98 L55.72 58.67 L54.67 58.33 L54.03 57.98 L53.82 57.62 L54.06 57.28 M82.97 62.11 L82.33 62.76 L81.28 63.36 L79.85 63.90 L78.09 64.36 L76.04 64.73 L73.77 65.01 L71.35 65.19 L68.86 65.29 L66.37 65.29 L63.96 65.21 L61.69 65.06 L59.65 64.84 L57.89 64.57 L56.46 64.25 L55.41 63.91 L54.78 63.55 L54.58 63.19 L54.81 62.85 M83.48 67.67 L82.85 68.33 L81.81 68.94 L80.39 69.48 L78.64 69.94 L76.61 70.31 L74.36 70.60 L71.97 70.78 L69.50 70.88 L67.03 70.88 L64.63 70.80 L62.39 70.65 L60.36 70.43 L58.61 70.15 L57.20 69.83 L56.16 69.49 L55.54 69.13 L55.33 68.76 L55.57 68.41 M84.00 73.24 L83.37 73.90 L82.34 74.51 L80.94 75.06 L79.20 75.52 L77.18 75.90 L74.96 76.18 L72.58 76.37 L70.13 76.47 L67.68 76.47 L65.31 76.39 L63.08 76.24 L61.07 76.01 L59.34 75.74 L57.94 75.42 L56.91 75.07 L56.29 74.70 L56.09 74.33 L56.32 73.98 M84.51 78.80 L83.89 79.47 L82.87 80.09 L81.48 80.64 L79.75 81.10 L77.76 81.49 L75.55 81.77 L73.19 81.96 L70.76 82.06 L68.34 82.06 L65.98 81.98 L63.78 81.83 L61.78 81.60 L60.07 81.32 L58.68 81.00 L57.66 80.64 L57.04 80.27 L56.85 79.90 M85.03 84.37 L84.41 85.04 L83.40 85.66 L82.02 86.21 L80.31 86.69 L78.33 87.07 L76.14 87.36 L73.81 87.55 L71.40 87.65 L68.99 87.66 L66.66 87.57 L64.47 87.42 L62.50 87.19 L60.80 86.91 L59.42 86.58 L58.41 86.22 L57.80 85.85 L57.60 85.47 L57.83 85.11 M85.54 89.93 L84.93 90.61 L83.93 91.24 L82.56 91.79 L80.87 92.27 L78.90 92.66 L76.73 92.95 L74.42 93.14 L72.03 93.24 L69.65 93.25 L67.33 93.17 L65.17 93.01 L63.21 92.78 L61.52 92.49 L60.16 92.16 L59.16 91.80 L58.55 91.42 L58.36 91.04 L58.59 90.67 M86.06 95.50 L85.45 96.18 L84.46 96.81 L83.10 97.37 L81.42 97.85 L79.48 98.24 L77.32 98.54 L75.03 98.73 L72.67 98.83 L70.30 98.84 L68.01 98.76 L65.86 98.60 L63.92 98.37 L62.25 98.08 L60.90 97.74 L59.91 97.38 L59.31 97.00 L59.12 96.61 L59.34 96.24 M86.57 101.07 L85.97 101.75 L84.99 102.38 L83.64 102.95 L81.98 103.43 L80.05 103.83 L77.92 104.13 L75.64 104.32 L73.30 104.42 L70.96 104.43 L68.68 104.35 L66.56 104.19 L64.63 103.95 L62.98 103.66 L61.64 103.33 L60.66 102.96 L60.06 102.57 L59.87 102.18 L60.10 101.80 M87.09 106.63 L86.49 107.32 L85.52 107.96 L84.18 108.53 L82.53 109.02 L80.62 109.41 L78.51 109.71 L76.26 109.91 L73.93 110.02 L71.61 110.02 L69.36 109.94 L67.25 109.78 L65.35 109.54 L63.71 109.25 L62.38 108.91 L61.41 108.54 L60.82 108.14 L60.63 107.75 L60.85 107.37" fill="none" stroke="#5e5e5e" stroke-width="2.3" stroke-linecap="round"/><path d="M52.31 46.48 L52.55 46.15 M81.94 50.98 L81.29 51.62 L80.23 52.21 L78.77 52.74 L76.97 53.19 L74.89 53.56 L72.59 53.83 L70.13 54.01 L67.59 54.10 L65.06 54.11 L62.60 54.03 L60.30 53.88 L58.22 53.66 L56.43 53.40 L54.98 53.09 L53.92 52.75 L53.27 52.40 L53.07 52.05 L53.30 51.72 M82.46 56.54 L81.81 57.19 L80.75 57.79 L79.31 58.32 L77.53 58.77 L75.47 59.14 L73.18 59.42 L70.74 59.60 L68.23 59.69 L65.72 59.70 L63.28 59.62 L61.00 59.47 L58.94 59.25 L57.16 58.98 L55.72 58.67 L54.67 58.33 L54.03 57.98 L53.82 57.62 L54.06 57.28 M82.97 62.11 L82.33 62.76 L81.28 63.36 L79.85 63.90 L78.09 64.36 L76.04 64.73 L73.77 65.01 L71.35 65.19 L68.86 65.29 L66.37 65.29 L63.96 65.21 L61.69 65.06 L59.65 64.84 L57.89 64.57 L56.46 64.25 L55.41 63.91 L54.78 63.55 L54.58 63.19 L54.81 62.85 M83.48 67.67 L82.85 68.33 L81.81 68.94 L80.39 69.48 L78.64 69.94 L76.61 70.31 L74.36 70.60 L71.97 70.78 L69.50 70.88 L67.03 70.88 L64.63 70.80 L62.39 70.65 L60.36 70.43 L58.61 70.15 L57.20 69.83 L56.16 69.49 L55.54 69.13 L55.33 68.76 L55.57 68.41 M84.00 73.24 L83.37 73.90 L82.34 74.51 L80.94 75.06 L79.20 75.52 L77.18 75.90 L74.96 76.18 L72.58 76.37 L70.13 76.47 L67.68 76.47 L65.31 76.39 L63.08 76.24 L61.07 76.01 L59.34 75.74 L57.94 75.42 L56.91 75.07 L56.29 74.70 L56.09 74.33 L56.32 73.98 M84.51 78.80 L83.89 79.47 L82.87 80.09 L81.48 80.64 L79.75 81.10 L77.76 81.49 L75.55 81.77 L73.19 81.96 L70.76 82.06 L68.34 82.06 L65.98 81.98 L63.78 81.83 L61.78 81.60 L60.07 81.32 L58.68 81.00 L57.66 80.64 L57.04 80.27 L56.85 79.90 M85.03 84.37 L84.41 85.04 L83.40 85.66 L82.02 86.21 L80.31 86.69 L78.33 87.07 L76.14 87.36 L73.81 87.55 L71.40 87.65 L68.99 87.66 L66.66 87.57 L64.47 87.42 L62.50 87.19 L60.80 86.91 L59.42 86.58 L58.41 86.22 L57.80 85.85 L57.60 85.47 L57.83 85.11 M85.54 89.93 L84.93 90.61 L83.93 91.24 L82.56 91.79 L80.87 92.27 L78.90 92.66 L76.73 92.95 L74.42 93.14 L72.03 93.24 L69.65 93.25 L67.33 93.17 L65.17 93.01 L63.21 92.78 L61.52 92.49 L60.16 92.16 L59.16 91.80 L58.55 91.42 L58.36 91.04 L58.59 90.67 M86.06 95.50 L85.45 96.18 L84.46 96.81 L83.10 97.37 L81.42 97.85 L79.48 98.24 L77.32 98.54 L75.03 98.73 L72.67 98.83 L70.30 98.84 L68.01 98.76 L65.86 98.60 L63.92 98.37 L62.25 98.08 L60.90 97.74 L59.91 97.38 L59.31 97.00 L59.12 96.61 L59.34 96.24 M86.57 101.07 L85.97 101.75 L84.99 102.38 L83.64 102.95 L81.98 103.43 L80.05 103.83 L77.92 104.13 L75.64 104.32 L73.30 104.42 L70.96 104.43 L68.68 104.35 L66.56 104.19 L64.63 103.95 L62.98 103.66 L61.64 103.33 L60.66 102.96 L60.06 102.57 L59.87 102.18 L60.10 101.80 M87.09 106.63 L86.49 107.32 L85.52 107.96 L84.18 108.53 L82.53 109.02 L80.62 109.41 L78.51 109.71 L76.26 109.91 L73.93 110.02 L71.61 110.02 L69.36 109.94 L67.25 109.78 L65.35 109.54 L63.71 109.25 L62.38 108.91 L61.41 108.54 L60.82 108.14 L60.63 107.75 L60.85 107.37" fill="none" stroke="url(#gf)" stroke-width="1.15" stroke-linecap="round" transform="translate(0 -0.35)"/></g></g><g mask="url(#m2)" opacity=".09"><g transform="translate(0 260) scale(1 -1)"><path d="M93.12 80.46 L93.78 79.94 L94.86 79.46 L96.32 79.04 L98.12 78.68 L100.21 78.41 L102.52 78.23 L104.98 78.16 L107.51 78.19 L110.05 78.34 L112.51 78.60 L114.81 78.97 L116.90 79.45 L118.70 80.01 L120.16 80.66 L121.23 81.38 L121.89 82.13 L122.11 82.92 L121.89 83.70 M93.35 84.28 L94.00 83.75 L95.07 83.26 L96.52 82.82 L98.31 82.45 L100.38 82.17 L102.68 81.99 L105.12 81.91 L107.64 81.94 L110.16 82.09 L112.60 82.36 L114.89 82.73 L116.96 83.22 L118.75 83.79 L120.20 84.46 L121.26 85.18 L121.92 85.95 L122.14 86.75 L121.92 87.55 M93.57 88.10 L94.22 87.55 L95.28 87.05 L96.72 86.60 L98.50 86.22 L100.56 85.93 L102.84 85.74 L105.26 85.66 L107.76 85.69 L110.26 85.84 L112.69 86.11 L114.96 86.49 L117.02 86.99 L118.79 87.57 L120.23 88.25 L121.29 88.99 L121.94 89.77 L122.16 90.58 L121.95 91.40 M93.79 91.92 L94.44 91.36 L95.49 90.84 L96.93 90.38 L98.69 89.99 L100.73 89.70 L102.99 89.50 L105.40 89.41 L107.89 89.44 L110.37 89.60 L112.78 89.87 L115.04 90.26 L117.08 90.76 L118.84 91.35 L120.27 92.04 L121.32 92.79 L121.97 93.59 L122.19 94.42 L121.97 95.24 M94.02 95.74 L94.66 95.16 L95.71 94.63 L97.13 94.16 L98.88 93.76 L100.91 93.46 L103.15 93.25 L105.55 93.16 L108.01 93.19 L110.48 93.35 L112.87 93.62 L115.11 94.02 L117.14 94.52 L118.89 95.13 L120.31 95.83 L121.36 96.60 L122.00 97.41 L122.21 98.25 L122.00 99.09 M94.24 99.56 L94.88 98.97 L95.92 98.42 L97.33 97.94 L99.07 97.53 L101.08 97.22 L103.31 97.01 L105.69 96.92 L108.14 96.94 L110.59 97.10 L112.96 97.38 L115.19 97.78 L117.20 98.29 L118.94 98.91 L120.35 99.62 L121.39 100.40 L122.02 101.23 L122.24 102.08 L122.03 102.94 M94.25 104.00 L94.46 103.37 L95.10 102.77 L96.13 102.21 L97.53 101.72 L99.26 101.30 L101.26 100.98 L103.47 100.76 L105.83 100.67 L108.26 100.69 L110.70 100.85 L113.05 101.13 L115.26 101.54 L117.26 102.06 L118.99 102.69 L120.39 103.41 L121.42 104.21 L122.05 105.05 L122.26 105.92 L122.05 106.79 M94.69 107.19 L95.32 106.58 L96.34 106.01 L97.73 105.50 L99.45 105.07 L101.43 104.74 L103.63 104.52 L105.97 104.42 L108.39 104.44 L110.80 104.60 L113.14 104.89 L115.34 105.30 L117.32 105.83 L119.04 106.47 L120.43 107.21 L121.45 108.01 L122.08 108.87 L122.29 109.75 L122.08 110.64 M94.70 111.67 L94.91 111.01 L95.53 110.38 L96.55 109.80 L97.93 109.28 L99.64 108.84 L101.61 108.50 L103.79 108.27 L106.12 108.17 L108.51 108.19 L110.91 108.35 L113.23 108.64 L115.41 109.06 L117.38 109.60 L119.09 110.25 L120.46 111.00 L121.48 111.82 L122.10 112.69 L122.31 113.58 M95.13 114.83 L95.75 114.19 L96.76 113.59 L98.14 113.06 L99.83 112.61 L101.78 112.26 L103.95 112.03 L106.26 111.92 L108.64 111.94 L111.02 112.10 L113.33 112.40 L115.49 112.82 L117.45 113.37 L119.13 114.03 L120.50 114.79 L121.51 115.62 L122.13 116.50 L122.34 117.42 L122.13 118.33 M95.15 119.33 L95.36 118.65 L95.97 117.99 L96.98 117.38 L98.34 116.84 L100.01 116.38 L101.96 116.02 L104.11 115.78 L106.40 115.67 L108.76 115.69 L111.13 115.85 L113.42 116.15 L115.56 116.58 L117.51 117.14 L119.18 117.81 L120.54 118.58 L121.54 119.42 L122.16 120.32 L122.36 121.25 M95.58 122.47 L96.19 121.80 L97.19 121.17 L98.54 120.62 L100.20 120.15 L102.13 119.78 L104.27 119.54 L106.54 119.42 L108.89 119.44 L111.23 119.61 L113.51 119.91 L115.64 120.35 L117.57 120.91 L119.23 121.59 L120.58 122.37 L121.57 123.23 L122.18 124.14 L122.39 125.08 L122.18 126.03 M95.60 127.00" fill="none" stroke="#747474" stroke-width="2.4" stroke-linecap="round"/><path d="M93.12 80.46 L93.78 79.94 L94.86 79.46 L96.32 79.04 L98.12 78.68 L100.21 78.41 L102.52 78.23 L104.98 78.16 L107.51 78.19 L110.05 78.34 L112.51 78.60 L114.81 78.97 L116.90 79.45 L118.70 80.01 L120.16 80.66 L121.23 81.38 L121.89 82.13 L122.11 82.92 L121.89 83.70 M93.35 84.28 L94.00 83.75 L95.07 83.26 L96.52 82.82 L98.31 82.45 L100.38 82.17 L102.68 81.99 L105.12 81.91 L107.64 81.94 L110.16 82.09 L112.60 82.36 L114.89 82.73 L116.96 83.22 L118.75 83.79 L120.20 84.46 L121.26 85.18 L121.92 85.95 L122.14 86.75 L121.92 87.55 M93.57 88.10 L94.22 87.55 L95.28 87.05 L96.72 86.60 L98.50 86.22 L100.56 85.93 L102.84 85.74 L105.26 85.66 L107.76 85.69 L110.26 85.84 L112.69 86.11 L114.96 86.49 L117.02 86.99 L118.79 87.57 L120.23 88.25 L121.29 88.99 L121.94 89.77 L122.16 90.58 L121.95 91.40 M93.79 91.92 L94.44 91.36 L95.49 90.84 L96.93 90.38 L98.69 89.99 L100.73 89.70 L102.99 89.50 L105.40 89.41 L107.89 89.44 L110.37 89.60 L112.78 89.87 L115.04 90.26 L117.08 90.76 L118.84 91.35 L120.27 92.04 L121.32 92.79 L121.97 93.59 L122.19 94.42 L121.97 95.24 M94.02 95.74 L94.66 95.16 L95.71 94.63 L97.13 94.16 L98.88 93.76 L100.91 93.46 L103.15 93.25 L105.55 93.16 L108.01 93.19 L110.48 93.35 L112.87 93.62 L115.11 94.02 L117.14 94.52 L118.89 95.13 L120.31 95.83 L121.36 96.60 L122.00 97.41 L122.21 98.25 L122.00 99.09 M94.24 99.56 L94.88 98.97 L95.92 98.42 L97.33 97.94 L99.07 97.53 L101.08 97.22 L103.31 97.01 L105.69 96.92 L108.14 96.94 L110.59 97.10 L112.96 97.38 L115.19 97.78 L117.20 98.29 L118.94 98.91 L120.35 99.62 L121.39 100.40 L122.02 101.23 L122.24 102.08 L122.03 102.94 M94.25 104.00 L94.46 103.37 L95.10 102.77 L96.13 102.21 L97.53 101.72 L99.26 101.30 L101.26 100.98 L103.47 100.76 L105.83 100.67 L108.26 100.69 L110.70 100.85 L113.05 101.13 L115.26 101.54 L117.26 102.06 L118.99 102.69 L120.39 103.41 L121.42 104.21 L122.05 105.05 L122.26 105.92 L122.05 106.79 M94.69 107.19 L95.32 106.58 L96.34 106.01 L97.73 105.50 L99.45 105.07 L101.43 104.74 L103.63 104.52 L105.97 104.42 L108.39 104.44 L110.80 104.60 L113.14 104.89 L115.34 105.30 L117.32 105.83 L119.04 106.47 L120.43 107.21 L121.45 108.01 L122.08 108.87 L122.29 109.75 L122.08 110.64 M94.70 111.67 L94.91 111.01 L95.53 110.38 L96.55 109.80 L97.93 109.28 L99.64 108.84 L101.61 108.50 L103.79 108.27 L106.12 108.17 L108.51 108.19 L110.91 108.35 L113.23 108.64 L115.41 109.06 L117.38 109.60 L119.09 110.25 L120.46 111.00 L121.48 111.82 L122.10 112.69 L122.31 113.58 M95.13 114.83 L95.75 114.19 L96.76 113.59 L98.14 113.06 L99.83 112.61 L101.78 112.26 L103.95 112.03 L106.26 111.92 L108.64 111.94 L111.02 112.10 L113.33 112.40 L115.49 112.82 L117.45 113.37 L119.13 114.03 L120.50 114.79 L121.51 115.62 L122.13 116.50 L122.34 117.42 L122.13 118.33 M95.15 119.33 L95.36 118.65 L95.97 117.99 L96.98 117.38 L98.34 116.84 L100.01 116.38 L101.96 116.02 L104.11 115.78 L106.40 115.67 L108.76 115.69 L111.13 115.85 L113.42 116.15 L115.56 116.58 L117.51 117.14 L119.18 117.81 L120.54 118.58 L121.54 119.42 L122.16 120.32 L122.36 121.25 M95.58 122.47 L96.19 121.80 L97.19 121.17 L98.54 120.62 L100.20 120.15 L102.13 119.78 L104.27 119.54 L106.54 119.42 L108.89 119.44 L111.23 119.61 L113.51 119.91 L115.64 120.35 L117.57 120.91 L119.23 121.59 L120.58 122.37 L121.57 123.23 L122.18 124.14 L122.39 125.08 L122.18 126.03 M95.60 127.00" fill="none" stroke="url(#gb)" stroke-width="1.20" stroke-linecap="round" transform="translate(0 -0.3)"/><path d="M92.90 81.00 L93.12 80.46 M121.89 83.70 L121.24 84.46 L120.17 85.18 L118.72 85.84 L116.93 86.42 L114.86 86.90 L112.57 87.28 L110.13 87.55 L107.61 87.71 L105.10 87.74 L102.66 87.67 L100.37 87.49 L98.30 87.21 L96.51 86.84 L95.06 86.41 L94.00 85.92 L93.34 85.39 L93.12 84.83 L93.35 84.28 M121.92 87.55 L121.27 88.33 L120.21 89.06 L118.77 89.73 L116.99 90.32 L114.94 90.81 L112.66 91.20 L110.24 91.47 L107.74 91.62 L105.24 91.66 L102.81 91.58 L100.54 91.39 L98.49 91.11 L96.71 90.73 L95.28 90.28 L94.22 89.78 L93.57 89.23 L93.35 88.67 L93.57 88.10 M121.95 91.40 L121.30 92.19 L120.25 92.93 L118.82 93.62 L117.05 94.21 L115.01 94.72 L112.75 95.11 L110.34 95.38 L107.86 95.54 L105.38 95.57 L102.97 95.49 L100.72 95.30 L98.68 95.00 L96.92 94.62 L95.49 94.16 L94.44 93.64 L93.79 93.08 L93.58 92.50 L93.79 91.92 M121.97 95.24 L121.33 96.05 L120.28 96.81 L118.86 97.50 L117.11 98.11 L115.09 98.62 L112.84 99.02 L110.45 99.30 L107.99 99.46 L105.52 99.49 L103.13 99.40 L100.89 99.20 L98.87 98.90 L97.12 98.51 L95.70 98.03 L94.65 97.50 L94.01 96.93 L93.80 96.33 L94.02 95.74 M122.00 99.09 L121.36 99.91 L120.32 100.68 L118.91 101.39 L117.17 102.01 L115.16 102.53 L112.93 102.93 L110.56 103.21 L108.11 103.37 L105.66 103.40 L103.29 103.31 L101.07 103.11 L99.05 102.80 L97.32 102.39 L95.91 101.91 L94.87 101.36 L94.24 100.78 L94.02 100.17 L94.24 99.56 M122.03 102.94 L121.39 103.77 L120.36 104.56 L118.96 105.28 L117.23 105.91 L115.24 106.43 L113.02 106.84 L110.67 107.13 L108.24 107.29 L105.81 107.32 L103.45 107.23 L101.24 107.01 L99.24 106.69 L97.52 106.28 L96.12 105.78 L95.09 105.23 L94.46 104.63 L94.25 104.00 M122.05 106.79 L121.42 107.63 L120.40 108.43 L119.01 109.16 L117.30 109.80 L115.31 110.34 L113.11 110.75 L110.77 111.05 L108.36 111.21 L105.95 111.24 L103.61 111.14 L101.42 110.92 L99.43 110.59 L97.72 110.17 L96.33 109.66 L95.31 109.09 L94.69 108.47 L94.48 107.83 L94.69 107.19 M122.08 110.64 L121.46 111.50 L120.44 112.31 L119.06 113.05 L117.36 113.70 L115.39 114.24 L113.21 114.67 L110.88 114.96 L108.49 115.12 L106.09 115.15 L103.77 115.05 L101.59 114.82 L99.62 114.49 L97.92 114.05 L96.55 113.53 L95.53 112.95 L94.91 112.32 L94.70 111.67 M122.31 113.58 L122.11 114.48 L121.49 115.36 L120.48 116.18 L119.11 116.94 L117.42 117.60 L115.46 118.15 L113.30 118.58 L110.99 118.88 L108.61 119.04 L106.23 119.07 L103.93 118.96 L101.77 118.73 L99.81 118.39 L98.13 117.94 L96.76 117.41 L95.75 116.81 L95.13 116.17 L94.92 115.50 L95.13 114.83 M122.13 118.33 L121.52 119.22 L120.52 120.06 L119.15 120.82 L117.48 121.49 L115.54 122.05 L113.39 122.49 L111.10 122.79 L108.74 122.96 L106.38 122.98 L104.09 122.87 L101.94 122.64 L100.00 122.28 L98.33 121.83 L96.97 121.28 L95.97 120.67 L95.36 120.02 L95.15 119.33 M122.36 121.25 L122.16 122.18 L121.55 123.08 L120.55 123.93 L119.20 124.71 L117.54 125.39 L115.61 125.96 L113.48 126.40 L111.21 126.71 L108.86 126.87 L106.52 126.90 L104.25 126.78 L102.12 126.54 L100.19 126.18 L98.53 125.71 L97.18 125.16 L96.19 124.54 L95.58 123.86 L95.38 123.17 L95.58 122.47 M122.18 126.03 L121.58 126.94 L120.59 127.81 L119.25 128.60 L117.60 129.29 L115.69 129.87 L113.57 130.31 L111.31 130.62 L108.99 130.79 L106.66 130.81 L104.41 130.70 L102.29 130.45 L100.38 130.08 L98.73 129.60 L97.39 129.03 L96.41 128.40 L95.80 127.71 L95.60 127.00" fill="none" stroke="#666666" stroke-width="2.4" stroke-linecap="round"/><path d="M92.90 81.00 L93.12 80.46 M121.89 83.70 L121.24 84.46 L120.17 85.18 L118.72 85.84 L116.93 86.42 L114.86 86.90 L112.57 87.28 L110.13 87.55 L107.61 87.71 L105.10 87.74 L102.66 87.67 L100.37 87.49 L98.30 87.21 L96.51 86.84 L95.06 86.41 L94.00 85.92 L93.34 85.39 L93.12 84.83 L93.35 84.28 M121.92 87.55 L121.27 88.33 L120.21 89.06 L118.77 89.73 L116.99 90.32 L114.94 90.81 L112.66 91.20 L110.24 91.47 L107.74 91.62 L105.24 91.66 L102.81 91.58 L100.54 91.39 L98.49 91.11 L96.71 90.73 L95.28 90.28 L94.22 89.78 L93.57 89.23 L93.35 88.67 L93.57 88.10 M121.95 91.40 L121.30 92.19 L120.25 92.93 L118.82 93.62 L117.05 94.21 L115.01 94.72 L112.75 95.11 L110.34 95.38 L107.86 95.54 L105.38 95.57 L102.97 95.49 L100.72 95.30 L98.68 95.00 L96.92 94.62 L95.49 94.16 L94.44 93.64 L93.79 93.08 L93.58 92.50 L93.79 91.92 M121.97 95.24 L121.33 96.05 L120.28 96.81 L118.86 97.50 L117.11 98.11 L115.09 98.62 L112.84 99.02 L110.45 99.30 L107.99 99.46 L105.52 99.49 L103.13 99.40 L100.89 99.20 L98.87 98.90 L97.12 98.51 L95.70 98.03 L94.65 97.50 L94.01 96.93 L93.80 96.33 L94.02 95.74 M122.00 99.09 L121.36 99.91 L120.32 100.68 L118.91 101.39 L117.17 102.01 L115.16 102.53 L112.93 102.93 L110.56 103.21 L108.11 103.37 L105.66 103.40 L103.29 103.31 L101.07 103.11 L99.05 102.80 L97.32 102.39 L95.91 101.91 L94.87 101.36 L94.24 100.78 L94.02 100.17 L94.24 99.56 M122.03 102.94 L121.39 103.77 L120.36 104.56 L118.96 105.28 L117.23 105.91 L115.24 106.43 L113.02 106.84 L110.67 107.13 L108.24 107.29 L105.81 107.32 L103.45 107.23 L101.24 107.01 L99.24 106.69 L97.52 106.28 L96.12 105.78 L95.09 105.23 L94.46 104.63 L94.25 104.00 M122.05 106.79 L121.42 107.63 L120.40 108.43 L119.01 109.16 L117.30 109.80 L115.31 110.34 L113.11 110.75 L110.77 111.05 L108.36 111.21 L105.95 111.24 L103.61 111.14 L101.42 110.92 L99.43 110.59 L97.72 110.17 L96.33 109.66 L95.31 109.09 L94.69 108.47 L94.48 107.83 L94.69 107.19 M122.08 110.64 L121.46 111.50 L120.44 112.31 L119.06 113.05 L117.36 113.70 L115.39 114.24 L113.21 114.67 L110.88 114.96 L108.49 115.12 L106.09 115.15 L103.77 115.05 L101.59 114.82 L99.62 114.49 L97.92 114.05 L96.55 113.53 L95.53 112.95 L94.91 112.32 L94.70 111.67 M122.31 113.58 L122.11 114.48 L121.49 115.36 L120.48 116.18 L119.11 116.94 L117.42 117.60 L115.46 118.15 L113.30 118.58 L110.99 118.88 L108.61 119.04 L106.23 119.07 L103.93 118.96 L101.77 118.73 L99.81 118.39 L98.13 117.94 L96.76 117.41 L95.75 116.81 L95.13 116.17 L94.92 115.50 L95.13 114.83 M122.13 118.33 L121.52 119.22 L120.52 120.06 L119.15 120.82 L117.48 121.49 L115.54 122.05 L113.39 122.49 L111.10 122.79 L108.74 122.96 L106.38 122.98 L104.09 122.87 L101.94 122.64 L100.00 122.28 L98.33 121.83 L96.97 121.28 L95.97 120.67 L95.36 120.02 L95.15 119.33 M122.36 121.25 L122.16 122.18 L121.55 123.08 L120.55 123.93 L119.20 124.71 L117.54 125.39 L115.61 125.96 L113.48 126.40 L111.21 126.71 L108.86 126.87 L106.52 126.90 L104.25 126.78 L102.12 126.54 L100.19 126.18 L98.53 125.71 L97.18 125.16 L96.19 124.54 L95.58 123.86 L95.38 123.17 L95.58 122.47 M122.18 126.03 L121.58 126.94 L120.59 127.81 L119.25 128.60 L117.60 129.29 L115.69 129.87 L113.57 130.31 L111.31 130.62 L108.99 130.79 L106.66 130.81 L104.41 130.70 L102.29 130.45 L100.38 130.08 L98.73 129.60 L97.39 129.03 L96.41 128.40 L95.80 127.71 L95.60 127.00" fill="none" stroke="url(#gf)" stroke-width="1.20" stroke-linecap="round" transform="translate(0 -0.35)"/></g></g><g mask="url(#m3)" opacity=".09"><g transform="translate(0 294) scale(1 -1)"><path d="M134.43 105.56 L135.09 104.65 L136.18 103.81 L137.66 103.05 L139.49 102.41 L141.60 101.90 L143.94 101.55 L146.43 101.37 L149.00 101.37 L151.57 101.54 L154.06 101.89 L156.40 102.41 L158.51 103.09 L160.33 103.90 L161.81 104.83 L162.90 105.85 L163.57 106.93 L163.79 108.05 L163.57 109.16 M134.44 108.65 L135.11 107.73 L136.20 106.88 L137.68 106.12 L139.50 105.48 L141.61 104.97 L143.95 104.62 L146.43 104.43 L149.00 104.43 L151.57 104.60 L154.05 104.96 L156.39 105.48 L158.50 106.16 L160.32 106.98 L161.79 107.91 L162.88 108.93 L163.55 110.02 L163.77 111.14 L163.55 112.25 M134.46 111.73 L135.13 110.82 L136.22 109.96 L137.69 109.20 L139.51 108.55 L141.62 108.04 L143.95 107.68 L146.44 107.50 L149.00 107.49 L151.56 107.67 L154.05 108.02 L156.38 108.55 L158.49 109.23 L160.30 110.05 L161.78 110.99 L162.87 112.01 L163.53 113.11 L163.75 114.23 L163.53 115.35 M134.48 114.82 L135.14 113.90 L136.23 113.04 L137.71 112.27 L139.52 111.62 L141.63 111.10 L143.96 110.75 L146.44 110.56 L149.00 110.56 L151.56 110.73 L154.04 111.09 L156.37 111.61 L158.47 112.30 L160.29 113.12 L161.76 114.06 L162.85 115.10 L163.51 116.19 L163.74 117.32 L163.51 118.45 M134.50 117.91 L135.16 116.98 L136.25 116.12 L137.72 115.34 L139.54 114.69 L141.64 114.17 L143.96 113.81 L146.44 113.63 L149.00 113.62 L151.56 113.80 L154.04 114.15 L156.36 114.68 L158.46 115.37 L160.28 116.20 L161.75 117.14 L162.83 118.18 L163.50 119.28 L163.72 120.41 L163.49 121.54 M134.51 120.99 L135.18 120.06 L136.26 119.19 L137.73 118.42 L139.55 117.76 L141.65 117.24 L143.97 116.88 L146.45 116.69 L149.00 116.68 L151.55 116.86 L154.03 117.22 L156.35 117.75 L158.45 118.44 L160.26 119.27 L161.73 120.22 L162.81 121.26 L163.48 122.36 L163.70 123.50 L163.48 124.64 M134.53 124.08 L135.20 123.14 L136.28 122.27 L137.75 121.49 L139.56 120.83 L141.66 120.31 L143.98 119.94 L146.45 119.75 L149.00 119.75 L151.55 119.93 L154.02 120.28 L156.34 120.82 L158.44 121.51 L160.25 122.34 L161.72 123.30 L162.80 124.34 L163.46 125.45 L163.68 126.59 L163.46 127.73 M134.55 127.16 L135.21 126.22 L136.29 125.35 L137.76 124.56 L139.57 123.90 L141.67 123.37 L143.98 123.01 L146.45 122.82 L149.00 122.81 L151.55 122.99 L154.02 123.35 L156.33 123.88 L158.43 124.58 L160.23 125.42 L161.70 126.37 L162.78 127.42 L163.44 128.54 L163.66 129.68 L163.44 130.83 M134.57 130.25 L135.23 129.31 L136.31 128.42 L137.78 127.64 L139.58 126.97 L141.67 126.44 L143.99 126.07 L146.46 125.88 L149.00 125.88 L151.54 126.05 L154.01 126.41 L156.32 126.95 L158.42 127.65 L160.22 128.49 L161.68 129.45 L162.76 130.50 L163.42 131.62 L163.65 132.77 L163.42 133.92 M134.59 133.34 L135.25 132.39 L136.33 131.50 L137.79 130.71 L139.59 130.04 L141.68 129.51 L144.00 129.14 L146.46 128.95 L149.00 128.94 L151.54 129.12 L154.00 129.48 L156.32 130.02 L158.40 130.72 L160.21 131.56 L161.67 132.53 L162.75 133.59 L163.41 134.71 L163.63 135.86 L163.40 137.02 M134.60 136.42 L135.26 135.47 L136.34 134.58 L137.80 133.78 L139.61 133.11 L141.69 132.57 L144.00 132.20 L146.46 132.01 L149.00 132.00 L151.54 132.18 L154.00 132.55 L156.31 133.09 L158.39 133.79 L160.19 134.64 L161.65 135.60 L162.73 136.67 L163.39 137.79 L163.61 138.95 L163.39 140.11" fill="none" stroke="#747474" stroke-width="2.9" stroke-linecap="round"/><path d="M134.43 105.56 L135.09 104.65 L136.18 103.81 L137.66 103.05 L139.49 102.41 L141.60 101.90 L143.94 101.55 L146.43 101.37 L149.00 101.37 L151.57 101.54 L154.06 101.89 L156.40 102.41 L158.51 103.09 L160.33 103.90 L161.81 104.83 L162.90 105.85 L163.57 106.93 L163.79 108.05 L163.57 109.16 M134.44 108.65 L135.11 107.73 L136.20 106.88 L137.68 106.12 L139.50 105.48 L141.61 104.97 L143.95 104.62 L146.43 104.43 L149.00 104.43 L151.57 104.60 L154.05 104.96 L156.39 105.48 L158.50 106.16 L160.32 106.98 L161.79 107.91 L162.88 108.93 L163.55 110.02 L163.77 111.14 L163.55 112.25 M134.46 111.73 L135.13 110.82 L136.22 109.96 L137.69 109.20 L139.51 108.55 L141.62 108.04 L143.95 107.68 L146.44 107.50 L149.00 107.49 L151.56 107.67 L154.05 108.02 L156.38 108.55 L158.49 109.23 L160.30 110.05 L161.78 110.99 L162.87 112.01 L163.53 113.11 L163.75 114.23 L163.53 115.35 M134.48 114.82 L135.14 113.90 L136.23 113.04 L137.71 112.27 L139.52 111.62 L141.63 111.10 L143.96 110.75 L146.44 110.56 L149.00 110.56 L151.56 110.73 L154.04 111.09 L156.37 111.61 L158.47 112.30 L160.29 113.12 L161.76 114.06 L162.85 115.10 L163.51 116.19 L163.74 117.32 L163.51 118.45 M134.50 117.91 L135.16 116.98 L136.25 116.12 L137.72 115.34 L139.54 114.69 L141.64 114.17 L143.96 113.81 L146.44 113.63 L149.00 113.62 L151.56 113.80 L154.04 114.15 L156.36 114.68 L158.46 115.37 L160.28 116.20 L161.75 117.14 L162.83 118.18 L163.50 119.28 L163.72 120.41 L163.49 121.54 M134.51 120.99 L135.18 120.06 L136.26 119.19 L137.73 118.42 L139.55 117.76 L141.65 117.24 L143.97 116.88 L146.45 116.69 L149.00 116.68 L151.55 116.86 L154.03 117.22 L156.35 117.75 L158.45 118.44 L160.26 119.27 L161.73 120.22 L162.81 121.26 L163.48 122.36 L163.70 123.50 L163.48 124.64 M134.53 124.08 L135.20 123.14 L136.28 122.27 L137.75 121.49 L139.56 120.83 L141.66 120.31 L143.98 119.94 L146.45 119.75 L149.00 119.75 L151.55 119.93 L154.02 120.28 L156.34 120.82 L158.44 121.51 L160.25 122.34 L161.72 123.30 L162.80 124.34 L163.46 125.45 L163.68 126.59 L163.46 127.73 M134.55 127.16 L135.21 126.22 L136.29 125.35 L137.76 124.56 L139.57 123.90 L141.67 123.37 L143.98 123.01 L146.45 122.82 L149.00 122.81 L151.55 122.99 L154.02 123.35 L156.33 123.88 L158.43 124.58 L160.23 125.42 L161.70 126.37 L162.78 127.42 L163.44 128.54 L163.66 129.68 L163.44 130.83 M134.57 130.25 L135.23 129.31 L136.31 128.42 L137.78 127.64 L139.58 126.97 L141.67 126.44 L143.99 126.07 L146.46 125.88 L149.00 125.88 L151.54 126.05 L154.01 126.41 L156.32 126.95 L158.42 127.65 L160.22 128.49 L161.68 129.45 L162.76 130.50 L163.42 131.62 L163.65 132.77 L163.42 133.92 M134.59 133.34 L135.25 132.39 L136.33 131.50 L137.79 130.71 L139.59 130.04 L141.68 129.51 L144.00 129.14 L146.46 128.95 L149.00 128.94 L151.54 129.12 L154.00 129.48 L156.32 130.02 L158.40 130.72 L160.21 131.56 L161.67 132.53 L162.75 133.59 L163.41 134.71 L163.63 135.86 L163.40 137.02 M134.60 136.42 L135.26 135.47 L136.34 134.58 L137.80 133.78 L139.61 133.11 L141.69 132.57 L144.00 132.20 L146.46 132.01 L149.00 132.00 L151.54 132.18 L154.00 132.55 L156.31 133.09 L158.39 133.79 L160.19 134.64 L161.65 135.60 L162.73 136.67 L163.39 137.79 L163.61 138.95 L163.39 140.11" fill="none" stroke="url(#gb)" stroke-width="1.45" stroke-linecap="round" transform="translate(0 -0.3)"/><path d="M134.20 106.50 L134.43 105.56 M163.57 109.16 L162.90 110.24 L161.81 111.26 L160.33 112.19 L158.51 113.01 L156.39 113.69 L154.06 114.21 L151.57 114.56 L149.00 114.74 L146.43 114.74 L143.94 114.55 L141.61 114.20 L139.50 113.70 L137.67 113.06 L136.20 112.30 L135.11 111.45 L134.44 110.53 L134.22 109.59 L134.44 108.65 M163.55 112.25 L162.88 113.34 L161.79 114.37 L160.32 115.30 L158.49 116.12 L156.38 116.80 L154.05 117.32 L151.56 117.68 L149.00 117.86 L146.44 117.85 L143.95 117.67 L141.62 117.32 L139.51 116.81 L137.69 116.16 L136.21 115.40 L135.13 114.55 L134.46 113.63 L134.24 112.68 L134.46 111.73 M163.53 115.35 L162.86 116.44 L161.78 117.47 L160.30 118.41 L158.48 119.23 L156.38 119.91 L154.05 120.44 L151.56 120.80 L149.00 120.97 L146.44 120.97 L143.96 120.79 L141.63 120.43 L139.52 119.92 L137.70 119.27 L136.23 118.50 L135.14 117.65 L134.48 116.73 L134.25 115.77 L134.48 114.82 M163.51 118.45 L162.85 119.54 L161.76 120.57 L160.29 121.52 L158.47 122.34 L156.37 123.03 L154.04 123.56 L151.56 123.92 L149.00 124.09 L146.44 124.09 L143.96 123.90 L141.63 123.55 L139.53 123.03 L137.72 122.38 L136.24 121.61 L135.16 120.75 L134.50 119.82 L134.27 118.86 L134.50 117.91 M163.49 121.54 L162.83 122.64 L161.75 123.68 L160.27 124.63 L158.46 125.45 L156.36 126.14 L154.03 126.67 L151.56 127.03 L149.00 127.21 L146.45 127.21 L143.97 127.02 L141.64 126.66 L139.54 126.15 L137.73 125.49 L136.26 124.71 L135.18 123.85 L134.51 122.92 L134.29 121.95 L134.51 120.99 M163.48 124.64 L162.81 125.74 L161.73 126.78 L160.26 127.73 L158.45 128.57 L156.35 129.26 L154.03 129.79 L151.55 130.15 L149.00 130.33 L146.45 130.32 L143.97 130.14 L141.65 129.78 L139.56 129.26 L137.74 128.60 L136.28 127.82 L135.19 126.95 L134.53 126.01 L134.31 125.05 L134.53 124.08 M163.46 127.73 L162.80 128.84 L161.71 129.89 L160.25 130.84 L158.44 131.68 L156.34 132.37 L154.02 132.91 L151.55 133.27 L149.00 133.45 L146.45 133.44 L143.98 133.25 L141.66 132.89 L139.57 132.37 L137.76 131.71 L136.29 130.92 L135.21 130.05 L134.55 129.11 L134.33 128.14 L134.55 127.16 M163.44 130.83 L162.78 131.94 L161.70 132.99 L160.23 133.95 L158.42 134.79 L156.33 135.49 L154.01 136.02 L151.55 136.39 L149.00 136.57 L146.45 136.56 L143.99 136.37 L141.67 136.01 L139.58 135.48 L137.77 134.81 L136.31 134.03 L135.23 133.15 L134.57 132.20 L134.35 131.23 L134.57 130.25 M163.42 133.92 L162.76 135.04 L161.68 136.10 L160.22 137.06 L158.41 137.90 L156.32 138.60 L154.01 139.14 L151.54 139.50 L149.00 139.68 L146.46 139.68 L143.99 139.49 L141.68 139.12 L139.59 138.59 L137.79 137.92 L136.32 137.13 L135.25 136.25 L134.59 135.30 L134.36 134.32 L134.59 133.34 M163.40 137.02 L162.74 138.14 L161.67 139.20 L160.20 140.17 L158.40 141.01 L156.31 141.72 L154.00 142.26 L151.54 142.62 L149.00 142.80 L146.46 142.80 L144.00 142.60 L141.69 142.24 L139.60 141.71 L137.80 141.03 L136.34 140.24 L135.26 139.35 L134.60 138.39 L134.38 137.41 L134.60 136.42 M163.39 140.11 L162.73 141.24 L161.65 142.31 L160.19 143.28 L158.39 144.13 L156.30 144.83 L154.00 145.37 L151.54 145.74 L149.00 145.92 L146.46 145.91 L144.01 145.72 L141.70 145.35 L139.61 144.82 L137.81 144.14 L136.35 143.34 L135.28 142.45 L134.62 141.49 L134.40 140.50" fill="none" stroke="#666666" stroke-width="2.9" stroke-linecap="round"/><path d="M134.20 106.50 L134.43 105.56 M163.57 109.16 L162.90 110.24 L161.81 111.26 L160.33 112.19 L158.51 113.01 L156.39 113.69 L154.06 114.21 L151.57 114.56 L149.00 114.74 L146.43 114.74 L143.94 114.55 L141.61 114.20 L139.50 113.70 L137.67 113.06 L136.20 112.30 L135.11 111.45 L134.44 110.53 L134.22 109.59 L134.44 108.65 M163.55 112.25 L162.88 113.34 L161.79 114.37 L160.32 115.30 L158.49 116.12 L156.38 116.80 L154.05 117.32 L151.56 117.68 L149.00 117.86 L146.44 117.85 L143.95 117.67 L141.62 117.32 L139.51 116.81 L137.69 116.16 L136.21 115.40 L135.13 114.55 L134.46 113.63 L134.24 112.68 L134.46 111.73 M163.53 115.35 L162.86 116.44 L161.78 117.47 L160.30 118.41 L158.48 119.23 L156.38 119.91 L154.05 120.44 L151.56 120.80 L149.00 120.97 L146.44 120.97 L143.96 120.79 L141.63 120.43 L139.52 119.92 L137.70 119.27 L136.23 118.50 L135.14 117.65 L134.48 116.73 L134.25 115.77 L134.48 114.82 M163.51 118.45 L162.85 119.54 L161.76 120.57 L160.29 121.52 L158.47 122.34 L156.37 123.03 L154.04 123.56 L151.56 123.92 L149.00 124.09 L146.44 124.09 L143.96 123.90 L141.63 123.55 L139.53 123.03 L137.72 122.38 L136.24 121.61 L135.16 120.75 L134.50 119.82 L134.27 118.86 L134.50 117.91 M163.49 121.54 L162.83 122.64 L161.75 123.68 L160.27 124.63 L158.46 125.45 L156.36 126.14 L154.03 126.67 L151.56 127.03 L149.00 127.21 L146.45 127.21 L143.97 127.02 L141.64 126.66 L139.54 126.15 L137.73 125.49 L136.26 124.71 L135.18 123.85 L134.51 122.92 L134.29 121.95 L134.51 120.99 M163.48 124.64 L162.81 125.74 L161.73 126.78 L160.26 127.73 L158.45 128.57 L156.35 129.26 L154.03 129.79 L151.55 130.15 L149.00 130.33 L146.45 130.32 L143.97 130.14 L141.65 129.78 L139.56 129.26 L137.74 128.60 L136.28 127.82 L135.19 126.95 L134.53 126.01 L134.31 125.05 L134.53 124.08 M163.46 127.73 L162.80 128.84 L161.71 129.89 L160.25 130.84 L158.44 131.68 L156.34 132.37 L154.02 132.91 L151.55 133.27 L149.00 133.45 L146.45 133.44 L143.98 133.25 L141.66 132.89 L139.57 132.37 L137.76 131.71 L136.29 130.92 L135.21 130.05 L134.55 129.11 L134.33 128.14 L134.55 127.16 M163.44 130.83 L162.78 131.94 L161.70 132.99 L160.23 133.95 L158.42 134.79 L156.33 135.49 L154.01 136.02 L151.55 136.39 L149.00 136.57 L146.45 136.56 L143.99 136.37 L141.67 136.01 L139.58 135.48 L137.77 134.81 L136.31 134.03 L135.23 133.15 L134.57 132.20 L134.35 131.23 L134.57 130.25 M163.42 133.92 L162.76 135.04 L161.68 136.10 L160.22 137.06 L158.41 137.90 L156.32 138.60 L154.01 139.14 L151.54 139.50 L149.00 139.68 L146.46 139.68 L143.99 139.49 L141.68 139.12 L139.59 138.59 L137.79 137.92 L136.32 137.13 L135.25 136.25 L134.59 135.30 L134.36 134.32 L134.59 133.34 M163.40 137.02 L162.74 138.14 L161.67 139.20 L160.20 140.17 L158.40 141.01 L156.31 141.72 L154.00 142.26 L151.54 142.62 L149.00 142.80 L146.46 142.80 L144.00 142.60 L141.69 142.24 L139.60 141.71 L137.80 141.03 L136.34 140.24 L135.26 139.35 L134.60 138.39 L134.38 137.41 L134.60 136.42 M163.39 140.11 L162.73 141.24 L161.65 142.31 L160.19 143.28 L158.39 144.13 L156.30 144.83 L154.00 145.37 L151.54 145.74 L149.00 145.92 L146.46 145.91 L144.01 145.72 L141.70 145.35 L139.61 144.82 L137.81 144.14 L136.35 143.34 L135.28 142.45 L134.62 141.49 L134.40 140.50" fill="none" stroke="url(#gf)" stroke-width="1.45" stroke-linecap="round" transform="translate(0 -0.35)"/></g></g><g mask="url(#m4)" opacity=".09"><g transform="translate(0 332) scale(1 -1)"><path d="M180.35 126.75 L181.09 125.55 L182.31 124.42 L183.96 123.41 L186.00 122.55 L188.37 121.86 L190.98 121.37 L193.77 121.11 L196.65 121.06 L199.52 121.25 L202.31 121.67 L204.92 122.30 L207.29 123.14 L209.33 124.15 L210.98 125.31 L212.19 126.59 L212.94 127.94 L213.18 129.34 L212.92 130.74 M180.15 129.43 L180.89 128.22 L182.10 127.09 L183.76 126.08 L185.79 125.21 L188.16 124.52 L190.77 124.03 L193.55 123.76 L196.43 123.72 L199.30 123.91 L202.08 124.33 L204.70 124.96 L207.06 125.80 L209.09 126.82 L210.74 127.98 L211.96 129.26 L212.70 130.62 L212.95 132.02 L212.69 133.42 M179.95 132.11 L180.69 130.89 L181.90 129.76 L183.55 128.74 L185.59 127.87 L187.95 127.18 L190.56 126.69 L193.34 126.42 L196.21 126.37 L199.08 126.56 L201.86 126.98 L204.47 127.62 L206.83 128.46 L208.86 129.48 L210.51 130.65 L211.72 131.93 L212.46 133.30 L212.71 134.70 L212.45 136.11 M179.75 134.79 L180.49 133.57 L181.70 132.43 L183.35 131.40 L185.38 130.53 L187.74 129.84 L190.35 129.34 L193.12 129.07 L195.99 129.03 L198.86 129.22 L201.64 129.64 L204.24 130.28 L206.60 131.12 L208.63 132.14 L210.28 133.32 L211.49 134.61 L212.23 135.98 L212.47 137.39 L212.21 138.80 M179.55 137.46 L180.29 136.24 L181.50 135.10 L183.14 134.07 L185.18 133.19 L187.53 132.49 L190.13 132.00 L192.91 131.73 L195.77 131.68 L198.64 131.87 L201.41 132.29 L204.02 132.94 L206.37 133.78 L208.40 134.81 L210.04 135.98 L211.25 137.28 L211.99 138.65 L212.24 140.07 L211.98 141.48 M179.35 140.14 L180.08 138.91 L181.29 137.76 L182.94 136.73 L184.97 135.85 L187.32 135.15 L189.92 134.66 L192.69 134.38 L195.55 134.34 L198.41 134.53 L201.19 134.95 L203.79 135.60 L206.14 136.44 L208.17 137.47 L209.81 138.65 L211.02 139.95 L211.76 141.33 L212.00 142.75 L211.74 144.17 M179.14 142.82 L179.88 141.58 L181.09 140.43 L182.74 139.40 L184.76 138.51 L187.11 137.81 L189.71 137.31 L192.48 137.04 L195.34 136.99 L198.19 137.18 L200.96 137.61 L203.56 138.25 L205.91 139.10 L207.93 140.14 L209.57 141.32 L210.78 142.62 L211.52 144.01 L211.76 145.43 L211.51 146.86 M178.94 145.49 L179.68 144.26 L180.89 143.10 L182.53 142.06 L184.56 141.17 L186.90 140.47 L189.50 139.97 L192.26 139.69 L195.12 139.65 L197.97 139.84 L200.74 140.26 L203.33 140.91 L205.68 141.77 L207.70 142.80 L209.34 143.99 L210.55 145.30 L211.28 146.68 L211.53 148.11 L211.27 149.54 M178.74 148.17 L179.48 146.93 L180.69 145.77 L182.33 144.73 L184.35 143.84 L186.69 143.13 L189.29 142.62 L192.05 142.35 L194.90 142.30 L197.75 142.49 L200.51 142.92 L203.11 143.57 L205.45 144.43 L207.47 145.47 L209.11 146.66 L210.31 147.97 L211.05 149.36 L211.29 150.80 L211.03 152.23 M178.54 150.85 L179.28 149.60 L180.49 148.44 L182.12 147.39 L184.14 146.50 L186.48 145.79 L189.07 145.28 L191.83 145.00 L194.68 144.95 L197.53 145.15 L200.29 145.58 L202.88 146.23 L205.22 147.09 L207.24 148.13 L208.87 149.33 L210.08 150.64 L210.81 152.04 L211.05 153.48 L210.80 154.92 M178.34 153.53 L179.08 152.27 L180.28 151.10 L181.92 150.05 L183.94 149.16 L186.27 148.44 L188.86 147.94 L191.62 147.66 L194.46 147.61 L197.31 147.80 L200.06 148.23 L202.65 148.89 L204.99 149.75 L207.00 150.79 L208.64 151.99 L209.84 153.31 L210.58 154.72 L210.82 156.16 L210.56 157.60" fill="none" stroke="#747474" stroke-width="3.0" stroke-linecap="round"/><path d="M180.35 126.75 L181.09 125.55 L182.31 124.42 L183.96 123.41 L186.00 122.55 L188.37 121.86 L190.98 121.37 L193.77 121.11 L196.65 121.06 L199.52 121.25 L202.31 121.67 L204.92 122.30 L207.29 123.14 L209.33 124.15 L210.98 125.31 L212.19 126.59 L212.94 127.94 L213.18 129.34 L212.92 130.74 M180.15 129.43 L180.89 128.22 L182.10 127.09 L183.76 126.08 L185.79 125.21 L188.16 124.52 L190.77 124.03 L193.55 123.76 L196.43 123.72 L199.30 123.91 L202.08 124.33 L204.70 124.96 L207.06 125.80 L209.09 126.82 L210.74 127.98 L211.96 129.26 L212.70 130.62 L212.95 132.02 L212.69 133.42 M179.95 132.11 L180.69 130.89 L181.90 129.76 L183.55 128.74 L185.59 127.87 L187.95 127.18 L190.56 126.69 L193.34 126.42 L196.21 126.37 L199.08 126.56 L201.86 126.98 L204.47 127.62 L206.83 128.46 L208.86 129.48 L210.51 130.65 L211.72 131.93 L212.46 133.30 L212.71 134.70 L212.45 136.11 M179.75 134.79 L180.49 133.57 L181.70 132.43 L183.35 131.40 L185.38 130.53 L187.74 129.84 L190.35 129.34 L193.12 129.07 L195.99 129.03 L198.86 129.22 L201.64 129.64 L204.24 130.28 L206.60 131.12 L208.63 132.14 L210.28 133.32 L211.49 134.61 L212.23 135.98 L212.47 137.39 L212.21 138.80 M179.55 137.46 L180.29 136.24 L181.50 135.10 L183.14 134.07 L185.18 133.19 L187.53 132.49 L190.13 132.00 L192.91 131.73 L195.77 131.68 L198.64 131.87 L201.41 132.29 L204.02 132.94 L206.37 133.78 L208.40 134.81 L210.04 135.98 L211.25 137.28 L211.99 138.65 L212.24 140.07 L211.98 141.48 M179.35 140.14 L180.08 138.91 L181.29 137.76 L182.94 136.73 L184.97 135.85 L187.32 135.15 L189.92 134.66 L192.69 134.38 L195.55 134.34 L198.41 134.53 L201.19 134.95 L203.79 135.60 L206.14 136.44 L208.17 137.47 L209.81 138.65 L211.02 139.95 L211.76 141.33 L212.00 142.75 L211.74 144.17 M179.14 142.82 L179.88 141.58 L181.09 140.43 L182.74 139.40 L184.76 138.51 L187.11 137.81 L189.71 137.31 L192.48 137.04 L195.34 136.99 L198.19 137.18 L200.96 137.61 L203.56 138.25 L205.91 139.10 L207.93 140.14 L209.57 141.32 L210.78 142.62 L211.52 144.01 L211.76 145.43 L211.51 146.86 M178.94 145.49 L179.68 144.26 L180.89 143.10 L182.53 142.06 L184.56 141.17 L186.90 140.47 L189.50 139.97 L192.26 139.69 L195.12 139.65 L197.97 139.84 L200.74 140.26 L203.33 140.91 L205.68 141.77 L207.70 142.80 L209.34 143.99 L210.55 145.30 L211.28 146.68 L211.53 148.11 L211.27 149.54 M178.74 148.17 L179.48 146.93 L180.69 145.77 L182.33 144.73 L184.35 143.84 L186.69 143.13 L189.29 142.62 L192.05 142.35 L194.90 142.30 L197.75 142.49 L200.51 142.92 L203.11 143.57 L205.45 144.43 L207.47 145.47 L209.11 146.66 L210.31 147.97 L211.05 149.36 L211.29 150.80 L211.03 152.23 M178.54 150.85 L179.28 149.60 L180.49 148.44 L182.12 147.39 L184.14 146.50 L186.48 145.79 L189.07 145.28 L191.83 145.00 L194.68 144.95 L197.53 145.15 L200.29 145.58 L202.88 146.23 L205.22 147.09 L207.24 148.13 L208.87 149.33 L210.08 150.64 L210.81 152.04 L211.05 153.48 L210.80 154.92 M178.34 153.53 L179.08 152.27 L180.28 151.10 L181.92 150.05 L183.94 149.16 L186.27 148.44 L188.86 147.94 L191.62 147.66 L194.46 147.61 L197.31 147.80 L200.06 148.23 L202.65 148.89 L204.99 149.75 L207.00 150.79 L208.64 151.99 L209.84 153.31 L210.58 154.72 L210.82 156.16 L210.56 157.60" fill="none" stroke="url(#gb)" stroke-width="1.50" stroke-linecap="round" transform="translate(0 -0.3)"/><path d="M180.10 128.00 L180.35 126.75 M212.92 130.74 L212.17 132.09 L210.94 133.37 L209.27 134.53 L207.22 135.55 L204.85 136.39 L202.22 137.02 L199.42 137.44 L196.54 137.63 L193.65 137.59 L190.85 137.32 L188.23 136.84 L185.85 136.15 L183.80 135.28 L182.14 134.27 L180.91 133.14 L180.16 131.93 L179.90 130.68 L180.15 129.43 M212.69 133.42 L211.93 134.79 L210.71 136.07 L209.04 137.23 L206.99 138.25 L204.62 139.09 L202.00 139.73 L199.20 140.15 L196.32 140.34 L193.44 140.30 L190.64 140.03 L188.02 139.54 L185.65 138.85 L183.60 137.98 L181.94 136.97 L180.71 135.83 L179.96 134.62 L179.70 133.36 L179.95 132.11 M212.45 136.11 L211.70 137.48 L210.47 138.76 L208.81 139.93 L206.76 140.95 L204.39 141.80 L201.77 142.44 L198.98 142.86 L196.10 143.05 L193.22 143.01 L190.43 142.74 L187.81 142.25 L185.44 141.55 L183.39 140.68 L181.73 139.66 L180.51 138.52 L179.76 137.30 L179.50 136.05 L179.75 134.79 M212.21 138.80 L211.46 140.17 L210.24 141.46 L208.58 142.63 L206.53 143.66 L204.17 144.50 L201.55 145.14 L198.76 145.57 L195.88 145.76 L193.01 145.72 L190.22 145.45 L187.60 144.95 L185.23 144.26 L183.19 143.38 L181.53 142.36 L180.31 141.21 L179.56 139.99 L179.30 138.73 L179.55 137.46 M211.98 141.48 L211.23 142.86 L210.00 144.15 L208.35 145.33 L206.30 146.36 L203.94 147.21 L201.32 147.85 L198.54 148.28 L195.66 148.47 L192.79 148.43 L190.00 148.15 L187.39 147.66 L185.03 146.96 L182.99 146.08 L181.33 145.05 L180.11 143.91 L179.36 142.68 L179.10 141.41 L179.35 140.14 M211.74 144.17 L210.99 145.55 L209.77 146.85 L208.11 148.03 L206.07 149.06 L203.71 149.91 L201.10 150.56 L198.32 150.98 L195.45 151.18 L192.58 151.13 L189.79 150.86 L187.18 150.36 L184.82 149.66 L182.78 148.78 L181.13 147.75 L179.91 146.60 L179.16 145.36 L178.90 144.09 L179.14 142.82 M211.51 146.86 L210.76 148.24 L209.54 149.55 L207.88 150.73 L205.84 151.76 L203.48 152.62 L200.88 153.27 L198.09 153.69 L195.23 153.89 L192.36 153.84 L189.58 153.57 L186.97 153.07 L184.61 152.37 L182.58 151.48 L180.92 150.44 L179.70 149.29 L178.96 148.05 L178.70 146.77 L178.94 145.49 M211.27 149.54 L210.52 150.93 L209.30 152.24 L207.65 153.43 L205.61 154.47 L203.26 155.32 L200.65 155.97 L197.87 156.40 L195.01 156.60 L192.15 156.55 L189.37 156.27 L186.76 155.77 L184.41 155.07 L182.37 154.18 L180.72 153.14 L179.50 151.98 L178.76 150.74 L178.50 149.45 L178.74 148.17 M211.03 152.23 L210.29 153.62 L209.07 154.94 L207.42 156.13 L205.38 157.17 L203.03 158.03 L200.43 158.68 L197.65 159.11 L194.79 159.30 L191.93 159.26 L189.16 158.98 L186.55 158.48 L184.20 157.77 L182.17 156.88 L180.52 155.83 L179.30 154.67 L178.56 153.42 L178.30 152.14 L178.54 150.85 M210.80 154.92 L210.05 156.31 L208.83 157.63 L207.19 158.83 L205.15 159.87 L202.80 160.73 L200.20 161.39 L197.43 161.82 L194.57 162.01 L191.71 161.97 L188.94 161.69 L186.34 161.19 L183.99 160.47 L181.96 159.58 L180.32 158.53 L179.10 157.36 L178.35 156.11 L178.10 154.82 L178.34 153.53 M210.56 157.60 L209.82 159.01 L208.60 160.33 L206.95 161.53 L204.92 162.58 L202.58 163.44 L199.98 164.10 L197.21 164.53 L194.35 164.72 L191.50 164.68 L188.73 164.40 L186.13 163.89 L183.79 163.18 L181.76 162.28 L180.11 161.23 L178.90 160.05 L178.15 158.80 L177.90 157.50" fill="none" stroke="#666666" stroke-width="3.0" stroke-linecap="round"/><path d="M180.10 128.00 L180.35 126.75 M212.92 130.74 L212.17 132.09 L210.94 133.37 L209.27 134.53 L207.22 135.55 L204.85 136.39 L202.22 137.02 L199.42 137.44 L196.54 137.63 L193.65 137.59 L190.85 137.32 L188.23 136.84 L185.85 136.15 L183.80 135.28 L182.14 134.27 L180.91 133.14 L180.16 131.93 L179.90 130.68 L180.15 129.43 M212.69 133.42 L211.93 134.79 L210.71 136.07 L209.04 137.23 L206.99 138.25 L204.62 139.09 L202.00 139.73 L199.20 140.15 L196.32 140.34 L193.44 140.30 L190.64 140.03 L188.02 139.54 L185.65 138.85 L183.60 137.98 L181.94 136.97 L180.71 135.83 L179.96 134.62 L179.70 133.36 L179.95 132.11 M212.45 136.11 L211.70 137.48 L210.47 138.76 L208.81 139.93 L206.76 140.95 L204.39 141.80 L201.77 142.44 L198.98 142.86 L196.10 143.05 L193.22 143.01 L190.43 142.74 L187.81 142.25 L185.44 141.55 L183.39 140.68 L181.73 139.66 L180.51 138.52 L179.76 137.30 L179.50 136.05 L179.75 134.79 M212.21 138.80 L211.46 140.17 L210.24 141.46 L208.58 142.63 L206.53 143.66 L204.17 144.50 L201.55 145.14 L198.76 145.57 L195.88 145.76 L193.01 145.72 L190.22 145.45 L187.60 144.95 L185.23 144.26 L183.19 143.38 L181.53 142.36 L180.31 141.21 L179.56 139.99 L179.30 138.73 L179.55 137.46 M211.98 141.48 L211.23 142.86 L210.00 144.15 L208.35 145.33 L206.30 146.36 L203.94 147.21 L201.32 147.85 L198.54 148.28 L195.66 148.47 L192.79 148.43 L190.00 148.15 L187.39 147.66 L185.03 146.96 L182.99 146.08 L181.33 145.05 L180.11 143.91 L179.36 142.68 L179.10 141.41 L179.35 140.14 M211.74 144.17 L210.99 145.55 L209.77 146.85 L208.11 148.03 L206.07 149.06 L203.71 149.91 L201.10 150.56 L198.32 150.98 L195.45 151.18 L192.58 151.13 L189.79 150.86 L187.18 150.36 L184.82 149.66 L182.78 148.78 L181.13 147.75 L179.91 146.60 L179.16 145.36 L178.90 144.09 L179.14 142.82 M211.51 146.86 L210.76 148.24 L209.54 149.55 L207.88 150.73 L205.84 151.76 L203.48 152.62 L200.88 153.27 L198.09 153.69 L195.23 153.89 L192.36 153.84 L189.58 153.57 L186.97 153.07 L184.61 152.37 L182.58 151.48 L180.92 150.44 L179.70 149.29 L178.96 148.05 L178.70 146.77 L178.94 145.49 M211.27 149.54 L210.52 150.93 L209.30 152.24 L207.65 153.43 L205.61 154.47 L203.26 155.32 L200.65 155.97 L197.87 156.40 L195.01 156.60 L192.15 156.55 L189.37 156.27 L186.76 155.77 L184.41 155.07 L182.37 154.18 L180.72 153.14 L179.50 151.98 L178.76 150.74 L178.50 149.45 L178.74 148.17 M211.03 152.23 L210.29 153.62 L209.07 154.94 L207.42 156.13 L205.38 157.17 L203.03 158.03 L200.43 158.68 L197.65 159.11 L194.79 159.30 L191.93 159.26 L189.16 158.98 L186.55 158.48 L184.20 157.77 L182.17 156.88 L180.52 155.83 L179.30 154.67 L178.56 153.42 L178.30 152.14 L178.54 150.85 M210.80 154.92 L210.05 156.31 L208.83 157.63 L207.19 158.83 L205.15 159.87 L202.80 160.73 L200.20 161.39 L197.43 161.82 L194.57 162.01 L191.71 161.97 L188.94 161.69 L186.34 161.19 L183.99 160.47 L181.96 159.58 L180.32 158.53 L179.10 157.36 L178.35 156.11 L178.10 154.82 L178.34 153.53 M210.56 157.60 L209.82 159.01 L208.60 160.33 L206.95 161.53 L204.92 162.58 L202.58 163.44 L199.98 164.10 L197.21 164.53 L194.35 164.72 L191.50 164.68 L188.73 164.40 L186.13 163.89 L183.79 163.18 L181.76 162.28 L180.11 161.23 L178.90 160.05 L178.15 158.80 L177.90 157.50" fill="none" stroke="url(#gf)" stroke-width="1.50" stroke-linecap="round" transform="translate(0 -0.35)"/></g></g><path d="M15.00 17.07 L15.70 16.74 L16.84 16.47 L18.37 16.27 L20.24 16.16 L22.41 16.13 L24.80 16.21 L27.35 16.39 L29.97 16.68 L32.60 17.08 L35.15 17.59 L37.54 18.21 L39.71 18.94 L41.59 19.76 L43.13 20.67 L44.28 21.63 L45.01 22.64 L45.29 23.64 L45.12 24.62 M16.75 25.30 L17.45 24.96 L18.56 24.68 L20.07 24.48 L21.91 24.36 L24.04 24.34 L26.39 24.41 L28.90 24.58 L31.48 24.87 L34.06 25.27 L36.57 25.78 L38.92 26.40 L41.05 27.12 L42.90 27.94 L44.42 28.85 L45.55 29.82 L46.26 30.83 L46.54 31.84 L46.38 32.81 M18.50 33.52 L19.19 33.18 L20.29 32.90 L21.77 32.69 L23.58 32.57 L25.67 32.54 L27.99 32.60 L30.45 32.78 L32.99 33.06 L35.52 33.45 L37.99 33.96 L40.30 34.58 L42.40 35.30 L44.22 36.13 L45.70 37.04 L46.82 38.01 L47.52 39.02 L47.80 40.03 L47.64 41.01 M20.26 41.74 L20.93 41.40 L22.01 41.11 L23.47 40.90 L25.25 40.77 L27.31 40.74 L29.58 40.80 L32.00 40.97 L34.49 41.25 L36.99 41.64 L39.41 42.15 L41.68 42.76 L43.74 43.49 L45.53 44.31 L46.99 45.22 L48.09 46.19 L48.78 47.21 L49.05 48.22 L48.89 49.21 M22.01 49.97 L22.68 49.62 L23.74 49.33 L25.17 49.11 L26.92 48.98 L28.94 48.94 L31.17 49.00 L33.55 49.16 L36.00 49.44 L38.45 49.83 L40.83 50.33 L43.06 50.95 L45.09 51.67 L46.84 52.50 L48.28 53.41 L49.35 54.38 L50.04 55.39 L50.30 56.41 L50.15 57.41 M23.77 58.19 L24.42 57.84 L25.46 57.54 L26.86 57.32 L28.58 57.19 L30.57 57.14 L32.77 57.19 L35.10 57.36 L37.51 57.63 L39.91 58.01 L42.25 58.51 L44.44 59.13 L46.43 59.85 L48.16 60.68 L49.57 61.59 L50.62 62.57 L51.29 63.58 L51.56 64.61 L51.41 65.60 M25.52 66.42 L26.16 66.06 L27.19 65.76 L28.56 65.53 L30.25 65.39 L32.20 65.34 L34.36 65.39 L36.65 65.55 L39.01 65.82 L41.38 66.20 L43.67 66.70 L45.82 67.31 L47.78 68.04 L49.47 68.86 L50.86 69.78 L51.89 70.75 L52.55 71.77 L52.81 72.80 L52.66 73.80 M27.27 74.64 L27.90 74.28 L28.91 73.98 L30.26 73.74 L31.92 73.60 L33.84 73.54 L35.95 73.59 L38.20 73.74 L40.52 74.01 L42.84 74.39 L45.09 74.88 L47.20 75.50 L49.12 76.22 L50.78 77.05 L52.14 77.96 L53.16 78.94 L53.81 79.96 L54.06 80.99 L53.92 82.00 M29.03 82.87 L29.65 82.50 L30.63 82.19 L31.96 81.95 L33.59 81.80 L35.47 81.74 L37.54 81.78 L39.75 81.93 L42.03 82.20 L44.30 82.57 L46.51 83.07 L48.58 83.68 L50.46 84.40 L52.10 85.23 L53.43 86.14 L54.43 87.13 L55.06 88.15 L55.32 89.19 L55.18 90.19 M30.78 91.09 L31.39 90.72 L32.36 90.41 L33.66 90.17 L35.26 90.01 L37.10 89.94 L39.14 89.98 L41.30 90.13 L43.53 90.39 L45.76 90.76 L47.93 91.25 L49.96 91.86 L51.81 92.59 L53.41 93.41 L54.72 94.33 L55.70 95.32 L56.32 96.34 L56.57 97.38" fill="none" stroke="#747474" stroke-width="2.5" stroke-linecap="round"/><path d="M15.00 17.07 L15.70 16.74 L16.84 16.47 L18.37 16.27 L20.24 16.16 L22.41 16.13 L24.80 16.21 L27.35 16.39 L29.97 16.68 L32.60 17.08 L35.15 17.59 L37.54 18.21 L39.71 18.94 L41.59 19.76 L43.13 20.67 L44.28 21.63 L45.01 22.64 L45.29 23.64 L45.12 24.62 M16.75 25.30 L17.45 24.96 L18.56 24.68 L20.07 24.48 L21.91 24.36 L24.04 24.34 L26.39 24.41 L28.90 24.58 L31.48 24.87 L34.06 25.27 L36.57 25.78 L38.92 26.40 L41.05 27.12 L42.90 27.94 L44.42 28.85 L45.55 29.82 L46.26 30.83 L46.54 31.84 L46.38 32.81 M18.50 33.52 L19.19 33.18 L20.29 32.90 L21.77 32.69 L23.58 32.57 L25.67 32.54 L27.99 32.60 L30.45 32.78 L32.99 33.06 L35.52 33.45 L37.99 33.96 L40.30 34.58 L42.40 35.30 L44.22 36.13 L45.70 37.04 L46.82 38.01 L47.52 39.02 L47.80 40.03 L47.64 41.01 M20.26 41.74 L20.93 41.40 L22.01 41.11 L23.47 40.90 L25.25 40.77 L27.31 40.74 L29.58 40.80 L32.00 40.97 L34.49 41.25 L36.99 41.64 L39.41 42.15 L41.68 42.76 L43.74 43.49 L45.53 44.31 L46.99 45.22 L48.09 46.19 L48.78 47.21 L49.05 48.22 L48.89 49.21 M22.01 49.97 L22.68 49.62 L23.74 49.33 L25.17 49.11 L26.92 48.98 L28.94 48.94 L31.17 49.00 L33.55 49.16 L36.00 49.44 L38.45 49.83 L40.83 50.33 L43.06 50.95 L45.09 51.67 L46.84 52.50 L48.28 53.41 L49.35 54.38 L50.04 55.39 L50.30 56.41 L50.15 57.41 M23.77 58.19 L24.42 57.84 L25.46 57.54 L26.86 57.32 L28.58 57.19 L30.57 57.14 L32.77 57.19 L35.10 57.36 L37.51 57.63 L39.91 58.01 L42.25 58.51 L44.44 59.13 L46.43 59.85 L48.16 60.68 L49.57 61.59 L50.62 62.57 L51.29 63.58 L51.56 64.61 L51.41 65.60 M25.52 66.42 L26.16 66.06 L27.19 65.76 L28.56 65.53 L30.25 65.39 L32.20 65.34 L34.36 65.39 L36.65 65.55 L39.01 65.82 L41.38 66.20 L43.67 66.70 L45.82 67.31 L47.78 68.04 L49.47 68.86 L50.86 69.78 L51.89 70.75 L52.55 71.77 L52.81 72.80 L52.66 73.80 M27.27 74.64 L27.90 74.28 L28.91 73.98 L30.26 73.74 L31.92 73.60 L33.84 73.54 L35.95 73.59 L38.20 73.74 L40.52 74.01 L42.84 74.39 L45.09 74.88 L47.20 75.50 L49.12 76.22 L50.78 77.05 L52.14 77.96 L53.16 78.94 L53.81 79.96 L54.06 80.99 L53.92 82.00 M29.03 82.87 L29.65 82.50 L30.63 82.19 L31.96 81.95 L33.59 81.80 L35.47 81.74 L37.54 81.78 L39.75 81.93 L42.03 82.20 L44.30 82.57 L46.51 83.07 L48.58 83.68 L50.46 84.40 L52.10 85.23 L53.43 86.14 L54.43 87.13 L55.06 88.15 L55.32 89.19 L55.18 90.19 M30.78 91.09 L31.39 90.72 L32.36 90.41 L33.66 90.17 L35.26 90.01 L37.10 89.94 L39.14 89.98 L41.30 90.13 L43.53 90.39 L45.76 90.76 L47.93 91.25 L49.96 91.86 L51.81 92.59 L53.41 93.41 L54.72 94.33 L55.70 95.32 L56.32 96.34 L56.57 97.38" fill="none" stroke="url(#gb)" stroke-width="1.25" stroke-linecap="round" transform="translate(0 -0.3)"/><path d="M14.74 17.45 L15.00 17.07 M45.12 24.62 L44.51 25.53 L43.48 26.35 L42.05 27.05 L40.27 27.62 L38.20 28.05 L35.91 28.34 L33.46 28.51 L30.93 28.55 L28.40 28.48 L25.95 28.31 L23.66 28.06 L21.59 27.74 L19.80 27.36 L18.37 26.96 L17.31 26.53 L16.68 26.10 L16.49 25.68 L16.75 25.30 M46.38 32.81 L45.78 33.73 L44.76 34.55 L43.36 35.26 L41.61 35.83 L39.58 36.27 L37.33 36.57 L34.92 36.74 L32.43 36.78 L29.95 36.71 L27.54 36.54 L25.29 36.29 L23.25 35.97 L21.50 35.60 L20.09 35.19 L19.06 34.76 L18.44 34.33 L18.25 33.91 L18.50 33.52 M47.64 41.01 L47.05 41.93 L46.05 42.76 L44.67 43.47 L42.95 44.05 L40.96 44.49 L38.74 44.79 L36.38 44.96 L33.94 45.01 L31.50 44.95 L29.13 44.78 L26.92 44.53 L24.92 44.21 L23.20 43.84 L21.81 43.43 L20.80 43.00 L20.19 42.56 L20.01 42.14 L20.26 41.74 M48.89 49.21 L48.32 50.13 L47.33 50.96 L45.98 51.68 L44.30 52.26 L42.34 52.71 L40.16 53.02 L37.84 53.19 L35.44 53.24 L33.05 53.18 L30.72 53.02 L28.55 52.77 L26.58 52.45 L24.90 52.08 L23.53 51.66 L22.54 51.23 L21.94 50.79 L21.77 50.37 L22.01 49.97 M50.15 57.41 L49.58 58.33 L48.62 59.17 L47.29 59.89 L45.64 60.48 L43.71 60.93 L41.58 61.24 L39.30 61.42 L36.95 61.47 L34.59 61.41 L32.31 61.25 L30.18 61.01 L28.25 60.69 L26.59 60.31 L25.26 59.90 L24.28 59.47 L23.70 59.03 L23.52 58.59 L23.77 58.19 M51.41 65.60 L50.85 66.53 L49.91 67.37 L48.60 68.10 L46.98 68.69 L45.09 69.15 L43.00 69.47 L40.76 69.65 L38.45 69.71 L36.14 69.65 L33.90 69.49 L31.81 69.24 L29.92 68.93 L28.29 68.55 L26.98 68.14 L26.02 67.70 L25.45 67.26 L25.28 66.82 L25.52 66.42 M52.66 73.80 L52.12 74.74 L51.19 75.58 L49.91 76.31 L48.32 76.91 L46.47 77.37 L44.41 77.69 L42.22 77.88 L39.95 77.94 L37.69 77.88 L35.49 77.73 L33.44 77.48 L31.58 77.16 L29.99 76.79 L28.70 76.37 L27.76 75.93 L27.20 75.49 L27.04 75.05 L27.27 74.64 M53.92 82.00 L53.39 82.94 L52.48 83.79 L51.22 84.52 L49.66 85.12 L47.85 85.59 L45.83 85.91 L43.68 86.11 L41.46 86.17 L39.24 86.12 L37.08 85.96 L35.07 85.72 L33.25 85.40 L31.69 85.03 L30.42 84.61 L29.51 84.17 L28.96 83.72 L28.79 83.28 L29.03 82.87 M55.18 90.19 L54.66 91.14 L53.77 91.99 L52.54 92.73 L51.01 93.34 L49.23 93.81 L47.25 94.14 L45.14 94.33 L42.96 94.40 L40.78 94.35 L38.67 94.20 L36.70 93.96 L34.92 93.64 L33.38 93.26 L32.15 92.85 L31.25 92.40 L30.71 91.95 L30.55 91.51 L30.78 91.09" fill="none" stroke="#5e5e5e" stroke-width="2.5" stroke-linecap="round"/><path d="M14.74 17.45 L15.00 17.07 M45.12 24.62 L44.51 25.53 L43.48 26.35 L42.05 27.05 L40.27 27.62 L38.20 28.05 L35.91 28.34 L33.46 28.51 L30.93 28.55 L28.40 28.48 L25.95 28.31 L23.66 28.06 L21.59 27.74 L19.80 27.36 L18.37 26.96 L17.31 26.53 L16.68 26.10 L16.49 25.68 L16.75 25.30 M46.38 32.81 L45.78 33.73 L44.76 34.55 L43.36 35.26 L41.61 35.83 L39.58 36.27 L37.33 36.57 L34.92 36.74 L32.43 36.78 L29.95 36.71 L27.54 36.54 L25.29 36.29 L23.25 35.97 L21.50 35.60 L20.09 35.19 L19.06 34.76 L18.44 34.33 L18.25 33.91 L18.50 33.52 M47.64 41.01 L47.05 41.93 L46.05 42.76 L44.67 43.47 L42.95 44.05 L40.96 44.49 L38.74 44.79 L36.38 44.96 L33.94 45.01 L31.50 44.95 L29.13 44.78 L26.92 44.53 L24.92 44.21 L23.20 43.84 L21.81 43.43 L20.80 43.00 L20.19 42.56 L20.01 42.14 L20.26 41.74 M48.89 49.21 L48.32 50.13 L47.33 50.96 L45.98 51.68 L44.30 52.26 L42.34 52.71 L40.16 53.02 L37.84 53.19 L35.44 53.24 L33.05 53.18 L30.72 53.02 L28.55 52.77 L26.58 52.45 L24.90 52.08 L23.53 51.66 L22.54 51.23 L21.94 50.79 L21.77 50.37 L22.01 49.97 M50.15 57.41 L49.58 58.33 L48.62 59.17 L47.29 59.89 L45.64 60.48 L43.71 60.93 L41.58 61.24 L39.30 61.42 L36.95 61.47 L34.59 61.41 L32.31 61.25 L30.18 61.01 L28.25 60.69 L26.59 60.31 L25.26 59.90 L24.28 59.47 L23.70 59.03 L23.52 58.59 L23.77 58.19 M51.41 65.60 L50.85 66.53 L49.91 67.37 L48.60 68.10 L46.98 68.69 L45.09 69.15 L43.00 69.47 L40.76 69.65 L38.45 69.71 L36.14 69.65 L33.90 69.49 L31.81 69.24 L29.92 68.93 L28.29 68.55 L26.98 68.14 L26.02 67.70 L25.45 67.26 L25.28 66.82 L25.52 66.42 M52.66 73.80 L52.12 74.74 L51.19 75.58 L49.91 76.31 L48.32 76.91 L46.47 77.37 L44.41 77.69 L42.22 77.88 L39.95 77.94 L37.69 77.88 L35.49 77.73 L33.44 77.48 L31.58 77.16 L29.99 76.79 L28.70 76.37 L27.76 75.93 L27.20 75.49 L27.04 75.05 L27.27 74.64 M53.92 82.00 L53.39 82.94 L52.48 83.79 L51.22 84.52 L49.66 85.12 L47.85 85.59 L45.83 85.91 L43.68 86.11 L41.46 86.17 L39.24 86.12 L37.08 85.96 L35.07 85.72 L33.25 85.40 L31.69 85.03 L30.42 84.61 L29.51 84.17 L28.96 83.72 L28.79 83.28 L29.03 82.87 M55.18 90.19 L54.66 91.14 L53.77 91.99 L52.54 92.73 L51.01 93.34 L49.23 93.81 L47.25 94.14 L45.14 94.33 L42.96 94.40 L40.78 94.35 L38.67 94.20 L36.70 93.96 L34.92 93.64 L33.38 93.26 L32.15 92.85 L31.25 92.40 L30.71 91.95 L30.55 91.51 L30.78 91.09" fill="none" stroke="url(#gf)" stroke-width="1.25" stroke-linecap="round" transform="translate(0 -0.35)"/><path d="M52.55 46.15 L53.23 45.85 L54.34 45.60 L55.84 45.40 L57.67 45.26 L59.80 45.19 L62.15 45.21 L64.66 45.30 L67.24 45.48 L69.82 45.75 L72.32 46.10 L74.67 46.54 L76.80 47.04 L78.63 47.62 L80.12 48.25 L81.23 48.91 L81.91 49.60 L82.15 50.30 L81.94 50.98 M53.30 51.72 L53.98 51.41 L55.08 51.15 L56.56 50.95 L58.39 50.81 L60.50 50.74 L62.83 50.75 L65.31 50.84 L67.88 51.02 L70.44 51.29 L72.92 51.64 L75.25 52.08 L77.35 52.59 L79.17 53.16 L80.65 53.80 L81.75 54.47 L82.42 55.16 L82.66 55.86 L82.46 56.54 M54.06 57.28 L54.73 56.97 L55.82 56.71 L57.29 56.50 L59.10 56.36 L61.19 56.28 L63.51 56.29 L65.97 56.38 L68.51 56.56 L71.05 56.83 L73.51 57.18 L75.82 57.62 L77.91 58.13 L79.72 58.71 L81.18 59.34 L82.27 60.02 L82.94 60.72 L83.17 61.42 L82.97 62.11 M54.81 62.85 L55.48 62.53 L56.56 62.27 L58.02 62.05 L59.82 61.90 L61.89 61.83 L64.19 61.83 L66.63 61.92 L69.15 62.10 L71.66 62.37 L74.11 62.72 L76.40 63.16 L78.47 63.67 L80.26 64.25 L81.71 64.89 L82.79 65.57 L83.45 66.27 L83.69 66.98 L83.48 67.67 M55.57 68.41 L56.23 68.09 L57.30 67.82 L58.75 67.60 L60.53 67.45 L62.59 67.37 L64.86 67.38 L67.29 67.46 L69.78 67.64 L72.28 67.91 L74.70 68.26 L76.97 68.70 L79.03 69.21 L80.80 69.80 L82.24 70.44 L83.31 71.12 L83.97 71.83 L84.20 72.54 L84.00 73.24 M56.32 73.98 L56.98 73.65 L58.04 73.38 L59.48 73.16 L61.24 73.00 L63.28 72.92 L65.54 72.92 L67.94 73.00 L70.42 73.18 L72.89 73.44 L75.29 73.80 L77.55 74.24 L79.58 74.76 L81.34 75.35 L82.77 75.99 L83.83 76.68 L84.48 77.39 L84.71 78.10 L84.51 78.80 M56.85 79.90 L57.08 79.54 L57.73 79.22 L58.78 78.93 L60.21 78.71 L61.96 78.55 L63.98 78.46 L66.22 78.46 L68.60 78.54 L71.05 78.72 L73.51 78.98 L75.89 79.34 L78.12 79.78 L80.14 80.30 L81.88 80.89 L83.30 81.54 L84.35 82.23 L85.00 82.94 L85.23 83.66 L85.03 84.37 M57.83 85.11 L58.48 84.78 L59.52 84.49 L60.94 84.26 L62.67 84.10 L64.68 84.01 L66.89 84.00 L69.26 84.08 L71.69 84.26 L74.12 84.52 L76.48 84.88 L78.70 85.32 L80.70 85.84 L82.43 86.44 L83.83 87.09 L84.87 87.78 L85.51 88.50 L85.74 89.22 L85.54 89.93 M58.59 90.67 L59.23 90.34 L60.26 90.05 L61.66 89.81 L63.38 89.64 L65.37 89.55 L67.57 89.54 L69.91 89.62 L72.33 89.80 L74.74 90.06 L77.08 90.42 L79.27 90.86 L81.25 91.38 L82.97 91.98 L84.36 92.63 L85.39 93.33 L86.03 94.06 L86.25 94.78 L86.06 95.50 M59.34 96.24 L59.98 95.90 L61.01 95.60 L62.39 95.36 L64.10 95.19 L66.07 95.10 L68.25 95.09 L70.57 95.16 L72.96 95.34 L75.35 95.60 L77.67 95.96 L79.85 96.40 L81.81 96.93 L83.51 97.53 L84.89 98.18 L85.91 98.88 L86.54 99.61 L86.77 100.35 L86.57 101.07 M60.10 101.80 L60.73 101.46 L61.75 101.16 L63.12 100.91 L64.81 100.74 L66.77 100.64 L68.93 100.63 L71.23 100.70 L73.60 100.87 L75.97 101.14 L78.26 101.50 L80.42 101.94 L82.37 102.47 L84.05 103.07 L85.42 103.73 L86.43 104.44 L87.06 105.17 L87.28 105.91 L87.09 106.63 M60.85 107.37 L61.48 107.02 L62.49 106.71 L63.85 106.47 L65.52 106.29 L67.46 106.19 L69.60 106.17 L71.88 106.25 L74.23 106.41 L76.58 106.68 L78.86 107.03 L80.99 107.48 L82.93 108.01 L84.60 108.62 L85.95 109.28 L86.95 109.99 L87.57 110.73 L87.79 111.47" fill="none" stroke="#747474" stroke-width="2.3" stroke-linecap="round"/><path d="M52.55 46.15 L53.23 45.85 L54.34 45.60 L55.84 45.40 L57.67 45.26 L59.80 45.19 L62.15 45.21 L64.66 45.30 L67.24 45.48 L69.82 45.75 L72.32 46.10 L74.67 46.54 L76.80 47.04 L78.63 47.62 L80.12 48.25 L81.23 48.91 L81.91 49.60 L82.15 50.30 L81.94 50.98 M53.30 51.72 L53.98 51.41 L55.08 51.15 L56.56 50.95 L58.39 50.81 L60.50 50.74 L62.83 50.75 L65.31 50.84 L67.88 51.02 L70.44 51.29 L72.92 51.64 L75.25 52.08 L77.35 52.59 L79.17 53.16 L80.65 53.80 L81.75 54.47 L82.42 55.16 L82.66 55.86 L82.46 56.54 M54.06 57.28 L54.73 56.97 L55.82 56.71 L57.29 56.50 L59.10 56.36 L61.19 56.28 L63.51 56.29 L65.97 56.38 L68.51 56.56 L71.05 56.83 L73.51 57.18 L75.82 57.62 L77.91 58.13 L79.72 58.71 L81.18 59.34 L82.27 60.02 L82.94 60.72 L83.17 61.42 L82.97 62.11 M54.81 62.85 L55.48 62.53 L56.56 62.27 L58.02 62.05 L59.82 61.90 L61.89 61.83 L64.19 61.83 L66.63 61.92 L69.15 62.10 L71.66 62.37 L74.11 62.72 L76.40 63.16 L78.47 63.67 L80.26 64.25 L81.71 64.89 L82.79 65.57 L83.45 66.27 L83.69 66.98 L83.48 67.67 M55.57 68.41 L56.23 68.09 L57.30 67.82 L58.75 67.60 L60.53 67.45 L62.59 67.37 L64.86 67.38 L67.29 67.46 L69.78 67.64 L72.28 67.91 L74.70 68.26 L76.97 68.70 L79.03 69.21 L80.80 69.80 L82.24 70.44 L83.31 71.12 L83.97 71.83 L84.20 72.54 L84.00 73.24 M56.32 73.98 L56.98 73.65 L58.04 73.38 L59.48 73.16 L61.24 73.00 L63.28 72.92 L65.54 72.92 L67.94 73.00 L70.42 73.18 L72.89 73.44 L75.29 73.80 L77.55 74.24 L79.58 74.76 L81.34 75.35 L82.77 75.99 L83.83 76.68 L84.48 77.39 L84.71 78.10 L84.51 78.80 M56.85 79.90 L57.08 79.54 L57.73 79.22 L58.78 78.93 L60.21 78.71 L61.96 78.55 L63.98 78.46 L66.22 78.46 L68.60 78.54 L71.05 78.72 L73.51 78.98 L75.89 79.34 L78.12 79.78 L80.14 80.30 L81.88 80.89 L83.30 81.54 L84.35 82.23 L85.00 82.94 L85.23 83.66 L85.03 84.37 M57.83 85.11 L58.48 84.78 L59.52 84.49 L60.94 84.26 L62.67 84.10 L64.68 84.01 L66.89 84.00 L69.26 84.08 L71.69 84.26 L74.12 84.52 L76.48 84.88 L78.70 85.32 L80.70 85.84 L82.43 86.44 L83.83 87.09 L84.87 87.78 L85.51 88.50 L85.74 89.22 L85.54 89.93 M58.59 90.67 L59.23 90.34 L60.26 90.05 L61.66 89.81 L63.38 89.64 L65.37 89.55 L67.57 89.54 L69.91 89.62 L72.33 89.80 L74.74 90.06 L77.08 90.42 L79.27 90.86 L81.25 91.38 L82.97 91.98 L84.36 92.63 L85.39 93.33 L86.03 94.06 L86.25 94.78 L86.06 95.50 M59.34 96.24 L59.98 95.90 L61.01 95.60 L62.39 95.36 L64.10 95.19 L66.07 95.10 L68.25 95.09 L70.57 95.16 L72.96 95.34 L75.35 95.60 L77.67 95.96 L79.85 96.40 L81.81 96.93 L83.51 97.53 L84.89 98.18 L85.91 98.88 L86.54 99.61 L86.77 100.35 L86.57 101.07 M60.10 101.80 L60.73 101.46 L61.75 101.16 L63.12 100.91 L64.81 100.74 L66.77 100.64 L68.93 100.63 L71.23 100.70 L73.60 100.87 L75.97 101.14 L78.26 101.50 L80.42 101.94 L82.37 102.47 L84.05 103.07 L85.42 103.73 L86.43 104.44 L87.06 105.17 L87.28 105.91 L87.09 106.63 M60.85 107.37 L61.48 107.02 L62.49 106.71 L63.85 106.47 L65.52 106.29 L67.46 106.19 L69.60 106.17 L71.88 106.25 L74.23 106.41 L76.58 106.68 L78.86 107.03 L80.99 107.48 L82.93 108.01 L84.60 108.62 L85.95 109.28 L86.95 109.99 L87.57 110.73 L87.79 111.47" fill="none" stroke="url(#gb)" stroke-width="1.15" stroke-linecap="round" transform="translate(0 -0.3)"/><path d="M52.31 46.48 L52.55 46.15 M81.94 50.98 L81.29 51.62 L80.23 52.21 L78.77 52.74 L76.97 53.19 L74.89 53.56 L72.59 53.83 L70.13 54.01 L67.59 54.10 L65.06 54.11 L62.60 54.03 L60.30 53.88 L58.22 53.66 L56.43 53.40 L54.98 53.09 L53.92 52.75 L53.27 52.40 L53.07 52.05 L53.30 51.72 M82.46 56.54 L81.81 57.19 L80.75 57.79 L79.31 58.32 L77.53 58.77 L75.47 59.14 L73.18 59.42 L70.74 59.60 L68.23 59.69 L65.72 59.70 L63.28 59.62 L61.00 59.47 L58.94 59.25 L57.16 58.98 L55.72 58.67 L54.67 58.33 L54.03 57.98 L53.82 57.62 L54.06 57.28 M82.97 62.11 L82.33 62.76 L81.28 63.36 L79.85 63.90 L78.09 64.36 L76.04 64.73 L73.77 65.01 L71.35 65.19 L68.86 65.29 L66.37 65.29 L63.96 65.21 L61.69 65.06 L59.65 64.84 L57.89 64.57 L56.46 64.25 L55.41 63.91 L54.78 63.55 L54.58 63.19 L54.81 62.85 M83.48 67.67 L82.85 68.33 L81.81 68.94 L80.39 69.48 L78.64 69.94 L76.61 70.31 L74.36 70.60 L71.97 70.78 L69.50 70.88 L67.03 70.88 L64.63 70.80 L62.39 70.65 L60.36 70.43 L58.61 70.15 L57.20 69.83 L56.16 69.49 L55.54 69.13 L55.33 68.76 L55.57 68.41 M84.00 73.24 L83.37 73.90 L82.34 74.51 L80.94 75.06 L79.20 75.52 L77.18 75.90 L74.96 76.18 L72.58 76.37 L70.13 76.47 L67.68 76.47 L65.31 76.39 L63.08 76.24 L61.07 76.01 L59.34 75.74 L57.94 75.42 L56.91 75.07 L56.29 74.70 L56.09 74.33 L56.32 73.98 M84.51 78.80 L83.89 79.47 L82.87 80.09 L81.48 80.64 L79.75 81.10 L77.76 81.49 L75.55 81.77 L73.19 81.96 L70.76 82.06 L68.34 82.06 L65.98 81.98 L63.78 81.83 L61.78 81.60 L60.07 81.32 L58.68 81.00 L57.66 80.64 L57.04 80.27 L56.85 79.90 M85.03 84.37 L84.41 85.04 L83.40 85.66 L82.02 86.21 L80.31 86.69 L78.33 87.07 L76.14 87.36 L73.81 87.55 L71.40 87.65 L68.99 87.66 L66.66 87.57 L64.47 87.42 L62.50 87.19 L60.80 86.91 L59.42 86.58 L58.41 86.22 L57.80 85.85 L57.60 85.47 L57.83 85.11 M85.54 89.93 L84.93 90.61 L83.93 91.24 L82.56 91.79 L80.87 92.27 L78.90 92.66 L76.73 92.95 L74.42 93.14 L72.03 93.24 L69.65 93.25 L67.33 93.17 L65.17 93.01 L63.21 92.78 L61.52 92.49 L60.16 92.16 L59.16 91.80 L58.55 91.42 L58.36 91.04 L58.59 90.67 M86.06 95.50 L85.45 96.18 L84.46 96.81 L83.10 97.37 L81.42 97.85 L79.48 98.24 L77.32 98.54 L75.03 98.73 L72.67 98.83 L70.30 98.84 L68.01 98.76 L65.86 98.60 L63.92 98.37 L62.25 98.08 L60.90 97.74 L59.91 97.38 L59.31 97.00 L59.12 96.61 L59.34 96.24 M86.57 101.07 L85.97 101.75 L84.99 102.38 L83.64 102.95 L81.98 103.43 L80.05 103.83 L77.92 104.13 L75.64 104.32 L73.30 104.42 L70.96 104.43 L68.68 104.35 L66.56 104.19 L64.63 103.95 L62.98 103.66 L61.64 103.33 L60.66 102.96 L60.06 102.57 L59.87 102.18 L60.10 101.80 M87.09 106.63 L86.49 107.32 L85.52 107.96 L84.18 108.53 L82.53 109.02 L80.62 109.41 L78.51 109.71 L76.26 109.91 L73.93 110.02 L71.61 110.02 L69.36 109.94 L67.25 109.78 L65.35 109.54 L63.71 109.25 L62.38 108.91 L61.41 108.54 L60.82 108.14 L60.63 107.75 L60.85 107.37" fill="none" stroke="#5e5e5e" stroke-width="2.3" stroke-linecap="round"/><path d="M52.31 46.48 L52.55 46.15 M81.94 50.98 L81.29 51.62 L80.23 52.21 L78.77 52.74 L76.97 53.19 L74.89 53.56 L72.59 53.83 L70.13 54.01 L67.59 54.10 L65.06 54.11 L62.60 54.03 L60.30 53.88 L58.22 53.66 L56.43 53.40 L54.98 53.09 L53.92 52.75 L53.27 52.40 L53.07 52.05 L53.30 51.72 M82.46 56.54 L81.81 57.19 L80.75 57.79 L79.31 58.32 L77.53 58.77 L75.47 59.14 L73.18 59.42 L70.74 59.60 L68.23 59.69 L65.72 59.70 L63.28 59.62 L61.00 59.47 L58.94 59.25 L57.16 58.98 L55.72 58.67 L54.67 58.33 L54.03 57.98 L53.82 57.62 L54.06 57.28 M82.97 62.11 L82.33 62.76 L81.28 63.36 L79.85 63.90 L78.09 64.36 L76.04 64.73 L73.77 65.01 L71.35 65.19 L68.86 65.29 L66.37 65.29 L63.96 65.21 L61.69 65.06 L59.65 64.84 L57.89 64.57 L56.46 64.25 L55.41 63.91 L54.78 63.55 L54.58 63.19 L54.81 62.85 M83.48 67.67 L82.85 68.33 L81.81 68.94 L80.39 69.48 L78.64 69.94 L76.61 70.31 L74.36 70.60 L71.97 70.78 L69.50 70.88 L67.03 70.88 L64.63 70.80 L62.39 70.65 L60.36 70.43 L58.61 70.15 L57.20 69.83 L56.16 69.49 L55.54 69.13 L55.33 68.76 L55.57 68.41 M84.00 73.24 L83.37 73.90 L82.34 74.51 L80.94 75.06 L79.20 75.52 L77.18 75.90 L74.96 76.18 L72.58 76.37 L70.13 76.47 L67.68 76.47 L65.31 76.39 L63.08 76.24 L61.07 76.01 L59.34 75.74 L57.94 75.42 L56.91 75.07 L56.29 74.70 L56.09 74.33 L56.32 73.98 M84.51 78.80 L83.89 79.47 L82.87 80.09 L81.48 80.64 L79.75 81.10 L77.76 81.49 L75.55 81.77 L73.19 81.96 L70.76 82.06 L68.34 82.06 L65.98 81.98 L63.78 81.83 L61.78 81.60 L60.07 81.32 L58.68 81.00 L57.66 80.64 L57.04 80.27 L56.85 79.90 M85.03 84.37 L84.41 85.04 L83.40 85.66 L82.02 86.21 L80.31 86.69 L78.33 87.07 L76.14 87.36 L73.81 87.55 L71.40 87.65 L68.99 87.66 L66.66 87.57 L64.47 87.42 L62.50 87.19 L60.80 86.91 L59.42 86.58 L58.41 86.22 L57.80 85.85 L57.60 85.47 L57.83 85.11 M85.54 89.93 L84.93 90.61 L83.93 91.24 L82.56 91.79 L80.87 92.27 L78.90 92.66 L76.73 92.95 L74.42 93.14 L72.03 93.24 L69.65 93.25 L67.33 93.17 L65.17 93.01 L63.21 92.78 L61.52 92.49 L60.16 92.16 L59.16 91.80 L58.55 91.42 L58.36 91.04 L58.59 90.67 M86.06 95.50 L85.45 96.18 L84.46 96.81 L83.10 97.37 L81.42 97.85 L79.48 98.24 L77.32 98.54 L75.03 98.73 L72.67 98.83 L70.30 98.84 L68.01 98.76 L65.86 98.60 L63.92 98.37 L62.25 98.08 L60.90 97.74 L59.91 97.38 L59.31 97.00 L59.12 96.61 L59.34 96.24 M86.57 101.07 L85.97 101.75 L84.99 102.38 L83.64 102.95 L81.98 103.43 L80.05 103.83 L77.92 104.13 L75.64 104.32 L73.30 104.42 L70.96 104.43 L68.68 104.35 L66.56 104.19 L64.63 103.95 L62.98 103.66 L61.64 103.33 L60.66 102.96 L60.06 102.57 L59.87 102.18 L60.10 101.80 M87.09 106.63 L86.49 107.32 L85.52 107.96 L84.18 108.53 L82.53 109.02 L80.62 109.41 L78.51 109.71 L76.26 109.91 L73.93 110.02 L71.61 110.02 L69.36 109.94 L67.25 109.78 L65.35 109.54 L63.71 109.25 L62.38 108.91 L61.41 108.54 L60.82 108.14 L60.63 107.75 L60.85 107.37" fill="none" stroke="url(#gf)" stroke-width="1.15" stroke-linecap="round" transform="translate(0 -0.35)"/><path d="M93.12 80.46 L93.78 79.94 L94.86 79.46 L96.32 79.04 L98.12 78.68 L100.21 78.41 L102.52 78.23 L104.98 78.16 L107.51 78.19 L110.05 78.34 L112.51 78.60 L114.81 78.97 L116.90 79.45 L118.70 80.01 L120.16 80.66 L121.23 81.38 L121.89 82.13 L122.11 82.92 L121.89 83.70 M93.35 84.28 L94.00 83.75 L95.07 83.26 L96.52 82.82 L98.31 82.45 L100.38 82.17 L102.68 81.99 L105.12 81.91 L107.64 81.94 L110.16 82.09 L112.60 82.36 L114.89 82.73 L116.96 83.22 L118.75 83.79 L120.20 84.46 L121.26 85.18 L121.92 85.95 L122.14 86.75 L121.92 87.55 M93.57 88.10 L94.22 87.55 L95.28 87.05 L96.72 86.60 L98.50 86.22 L100.56 85.93 L102.84 85.74 L105.26 85.66 L107.76 85.69 L110.26 85.84 L112.69 86.11 L114.96 86.49 L117.02 86.99 L118.79 87.57 L120.23 88.25 L121.29 88.99 L121.94 89.77 L122.16 90.58 L121.95 91.40 M93.79 91.92 L94.44 91.36 L95.49 90.84 L96.93 90.38 L98.69 89.99 L100.73 89.70 L102.99 89.50 L105.40 89.41 L107.89 89.44 L110.37 89.60 L112.78 89.87 L115.04 90.26 L117.08 90.76 L118.84 91.35 L120.27 92.04 L121.32 92.79 L121.97 93.59 L122.19 94.42 L121.97 95.24 M94.02 95.74 L94.66 95.16 L95.71 94.63 L97.13 94.16 L98.88 93.76 L100.91 93.46 L103.15 93.25 L105.55 93.16 L108.01 93.19 L110.48 93.35 L112.87 93.62 L115.11 94.02 L117.14 94.52 L118.89 95.13 L120.31 95.83 L121.36 96.60 L122.00 97.41 L122.21 98.25 L122.00 99.09 M94.24 99.56 L94.88 98.97 L95.92 98.42 L97.33 97.94 L99.07 97.53 L101.08 97.22 L103.31 97.01 L105.69 96.92 L108.14 96.94 L110.59 97.10 L112.96 97.38 L115.19 97.78 L117.20 98.29 L118.94 98.91 L120.35 99.62 L121.39 100.40 L122.02 101.23 L122.24 102.08 L122.03 102.94 M94.25 104.00 L94.46 103.37 L95.10 102.77 L96.13 102.21 L97.53 101.72 L99.26 101.30 L101.26 100.98 L103.47 100.76 L105.83 100.67 L108.26 100.69 L110.70 100.85 L113.05 101.13 L115.26 101.54 L117.26 102.06 L118.99 102.69 L120.39 103.41 L121.42 104.21 L122.05 105.05 L122.26 105.92 L122.05 106.79 M94.69 107.19 L95.32 106.58 L96.34 106.01 L97.73 105.50 L99.45 105.07 L101.43 104.74 L103.63 104.52 L105.97 104.42 L108.39 104.44 L110.80 104.60 L113.14 104.89 L115.34 105.30 L117.32 105.83 L119.04 106.47 L120.43 107.21 L121.45 108.01 L122.08 108.87 L122.29 109.75 L122.08 110.64 M94.70 111.67 L94.91 111.01 L95.53 110.38 L96.55 109.80 L97.93 109.28 L99.64 108.84 L101.61 108.50 L103.79 108.27 L106.12 108.17 L108.51 108.19 L110.91 108.35 L113.23 108.64 L115.41 109.06 L117.38 109.60 L119.09 110.25 L120.46 111.00 L121.48 111.82 L122.10 112.69 L122.31 113.58 M95.13 114.83 L95.75 114.19 L96.76 113.59 L98.14 113.06 L99.83 112.61 L101.78 112.26 L103.95 112.03 L106.26 111.92 L108.64 111.94 L111.02 112.10 L113.33 112.40 L115.49 112.82 L117.45 113.37 L119.13 114.03 L120.50 114.79 L121.51 115.62 L122.13 116.50 L122.34 117.42 L122.13 118.33 M95.15 119.33 L95.36 118.65 L95.97 117.99 L96.98 117.38 L98.34 116.84 L100.01 116.38 L101.96 116.02 L104.11 115.78 L106.40 115.67 L108.76 115.69 L111.13 115.85 L113.42 116.15 L115.56 116.58 L117.51 117.14 L119.18 117.81 L120.54 118.58 L121.54 119.42 L122.16 120.32 L122.36 121.25 M95.58 122.47 L96.19 121.80 L97.19 121.17 L98.54 120.62 L100.20 120.15 L102.13 119.78 L104.27 119.54 L106.54 119.42 L108.89 119.44 L111.23 119.61 L113.51 119.91 L115.64 120.35 L117.57 120.91 L119.23 121.59 L120.58 122.37 L121.57 123.23 L122.18 124.14 L122.39 125.08 L122.18 126.03 M95.60 127.00" fill="none" stroke="#747474" stroke-width="2.4" stroke-linecap="round"/><path d="M93.12 80.46 L93.78 79.94 L94.86 79.46 L96.32 79.04 L98.12 78.68 L100.21 78.41 L102.52 78.23 L104.98 78.16 L107.51 78.19 L110.05 78.34 L112.51 78.60 L114.81 78.97 L116.90 79.45 L118.70 80.01 L120.16 80.66 L121.23 81.38 L121.89 82.13 L122.11 82.92 L121.89 83.70 M93.35 84.28 L94.00 83.75 L95.07 83.26 L96.52 82.82 L98.31 82.45 L100.38 82.17 L102.68 81.99 L105.12 81.91 L107.64 81.94 L110.16 82.09 L112.60 82.36 L114.89 82.73 L116.96 83.22 L118.75 83.79 L120.20 84.46 L121.26 85.18 L121.92 85.95 L122.14 86.75 L121.92 87.55 M93.57 88.10 L94.22 87.55 L95.28 87.05 L96.72 86.60 L98.50 86.22 L100.56 85.93 L102.84 85.74 L105.26 85.66 L107.76 85.69 L110.26 85.84 L112.69 86.11 L114.96 86.49 L117.02 86.99 L118.79 87.57 L120.23 88.25 L121.29 88.99 L121.94 89.77 L122.16 90.58 L121.95 91.40 M93.79 91.92 L94.44 91.36 L95.49 90.84 L96.93 90.38 L98.69 89.99 L100.73 89.70 L102.99 89.50 L105.40 89.41 L107.89 89.44 L110.37 89.60 L112.78 89.87 L115.04 90.26 L117.08 90.76 L118.84 91.35 L120.27 92.04 L121.32 92.79 L121.97 93.59 L122.19 94.42 L121.97 95.24 M94.02 95.74 L94.66 95.16 L95.71 94.63 L97.13 94.16 L98.88 93.76 L100.91 93.46 L103.15 93.25 L105.55 93.16 L108.01 93.19 L110.48 93.35 L112.87 93.62 L115.11 94.02 L117.14 94.52 L118.89 95.13 L120.31 95.83 L121.36 96.60 L122.00 97.41 L122.21 98.25 L122.00 99.09 M94.24 99.56 L94.88 98.97 L95.92 98.42 L97.33 97.94 L99.07 97.53 L101.08 97.22 L103.31 97.01 L105.69 96.92 L108.14 96.94 L110.59 97.10 L112.96 97.38 L115.19 97.78 L117.20 98.29 L118.94 98.91 L120.35 99.62 L121.39 100.40 L122.02 101.23 L122.24 102.08 L122.03 102.94 M94.25 104.00 L94.46 103.37 L95.10 102.77 L96.13 102.21 L97.53 101.72 L99.26 101.30 L101.26 100.98 L103.47 100.76 L105.83 100.67 L108.26 100.69 L110.70 100.85 L113.05 101.13 L115.26 101.54 L117.26 102.06 L118.99 102.69 L120.39 103.41 L121.42 104.21 L122.05 105.05 L122.26 105.92 L122.05 106.79 M94.69 107.19 L95.32 106.58 L96.34 106.01 L97.73 105.50 L99.45 105.07 L101.43 104.74 L103.63 104.52 L105.97 104.42 L108.39 104.44 L110.80 104.60 L113.14 104.89 L115.34 105.30 L117.32 105.83 L119.04 106.47 L120.43 107.21 L121.45 108.01 L122.08 108.87 L122.29 109.75 L122.08 110.64 M94.70 111.67 L94.91 111.01 L95.53 110.38 L96.55 109.80 L97.93 109.28 L99.64 108.84 L101.61 108.50 L103.79 108.27 L106.12 108.17 L108.51 108.19 L110.91 108.35 L113.23 108.64 L115.41 109.06 L117.38 109.60 L119.09 110.25 L120.46 111.00 L121.48 111.82 L122.10 112.69 L122.31 113.58 M95.13 114.83 L95.75 114.19 L96.76 113.59 L98.14 113.06 L99.83 112.61 L101.78 112.26 L103.95 112.03 L106.26 111.92 L108.64 111.94 L111.02 112.10 L113.33 112.40 L115.49 112.82 L117.45 113.37 L119.13 114.03 L120.50 114.79 L121.51 115.62 L122.13 116.50 L122.34 117.42 L122.13 118.33 M95.15 119.33 L95.36 118.65 L95.97 117.99 L96.98 117.38 L98.34 116.84 L100.01 116.38 L101.96 116.02 L104.11 115.78 L106.40 115.67 L108.76 115.69 L111.13 115.85 L113.42 116.15 L115.56 116.58 L117.51 117.14 L119.18 117.81 L120.54 118.58 L121.54 119.42 L122.16 120.32 L122.36 121.25 M95.58 122.47 L96.19 121.80 L97.19 121.17 L98.54 120.62 L100.20 120.15 L102.13 119.78 L104.27 119.54 L106.54 119.42 L108.89 119.44 L111.23 119.61 L113.51 119.91 L115.64 120.35 L117.57 120.91 L119.23 121.59 L120.58 122.37 L121.57 123.23 L122.18 124.14 L122.39 125.08 L122.18 126.03 M95.60 127.00" fill="none" stroke="url(#gb)" stroke-width="1.20" stroke-linecap="round" transform="translate(0 -0.3)"/><path d="M92.90 81.00 L93.12 80.46 M121.89 83.70 L121.24 84.46 L120.17 85.18 L118.72 85.84 L116.93 86.42 L114.86 86.90 L112.57 87.28 L110.13 87.55 L107.61 87.71 L105.10 87.74 L102.66 87.67 L100.37 87.49 L98.30 87.21 L96.51 86.84 L95.06 86.41 L94.00 85.92 L93.34 85.39 L93.12 84.83 L93.35 84.28 M121.92 87.55 L121.27 88.33 L120.21 89.06 L118.77 89.73 L116.99 90.32 L114.94 90.81 L112.66 91.20 L110.24 91.47 L107.74 91.62 L105.24 91.66 L102.81 91.58 L100.54 91.39 L98.49 91.11 L96.71 90.73 L95.28 90.28 L94.22 89.78 L93.57 89.23 L93.35 88.67 L93.57 88.10 M121.95 91.40 L121.30 92.19 L120.25 92.93 L118.82 93.62 L117.05 94.21 L115.01 94.72 L112.75 95.11 L110.34 95.38 L107.86 95.54 L105.38 95.57 L102.97 95.49 L100.72 95.30 L98.68 95.00 L96.92 94.62 L95.49 94.16 L94.44 93.64 L93.79 93.08 L93.58 92.50 L93.79 91.92 M121.97 95.24 L121.33 96.05 L120.28 96.81 L118.86 97.50 L117.11 98.11 L115.09 98.62 L112.84 99.02 L110.45 99.30 L107.99 99.46 L105.52 99.49 L103.13 99.40 L100.89 99.20 L98.87 98.90 L97.12 98.51 L95.70 98.03 L94.65 97.50 L94.01 96.93 L93.80 96.33 L94.02 95.74 M122.00 99.09 L121.36 99.91 L120.32 100.68 L118.91 101.39 L117.17 102.01 L115.16 102.53 L112.93 102.93 L110.56 103.21 L108.11 103.37 L105.66 103.40 L103.29 103.31 L101.07 103.11 L99.05 102.80 L97.32 102.39 L95.91 101.91 L94.87 101.36 L94.24 100.78 L94.02 100.17 L94.24 99.56 M122.03 102.94 L121.39 103.77 L120.36 104.56 L118.96 105.28 L117.23 105.91 L115.24 106.43 L113.02 106.84 L110.67 107.13 L108.24 107.29 L105.81 107.32 L103.45 107.23 L101.24 107.01 L99.24 106.69 L97.52 106.28 L96.12 105.78 L95.09 105.23 L94.46 104.63 L94.25 104.00 M122.05 106.79 L121.42 107.63 L120.40 108.43 L119.01 109.16 L117.30 109.80 L115.31 110.34 L113.11 110.75 L110.77 111.05 L108.36 111.21 L105.95 111.24 L103.61 111.14 L101.42 110.92 L99.43 110.59 L97.72 110.17 L96.33 109.66 L95.31 109.09 L94.69 108.47 L94.48 107.83 L94.69 107.19 M122.08 110.64 L121.46 111.50 L120.44 112.31 L119.06 113.05 L117.36 113.70 L115.39 114.24 L113.21 114.67 L110.88 114.96 L108.49 115.12 L106.09 115.15 L103.77 115.05 L101.59 114.82 L99.62 114.49 L97.92 114.05 L96.55 113.53 L95.53 112.95 L94.91 112.32 L94.70 111.67 M122.31 113.58 L122.11 114.48 L121.49 115.36 L120.48 116.18 L119.11 116.94 L117.42 117.60 L115.46 118.15 L113.30 118.58 L110.99 118.88 L108.61 119.04 L106.23 119.07 L103.93 118.96 L101.77 118.73 L99.81 118.39 L98.13 117.94 L96.76 117.41 L95.75 116.81 L95.13 116.17 L94.92 115.50 L95.13 114.83 M122.13 118.33 L121.52 119.22 L120.52 120.06 L119.15 120.82 L117.48 121.49 L115.54 122.05 L113.39 122.49 L111.10 122.79 L108.74 122.96 L106.38 122.98 L104.09 122.87 L101.94 122.64 L100.00 122.28 L98.33 121.83 L96.97 121.28 L95.97 120.67 L95.36 120.02 L95.15 119.33 M122.36 121.25 L122.16 122.18 L121.55 123.08 L120.55 123.93 L119.20 124.71 L117.54 125.39 L115.61 125.96 L113.48 126.40 L111.21 126.71 L108.86 126.87 L106.52 126.90 L104.25 126.78 L102.12 126.54 L100.19 126.18 L98.53 125.71 L97.18 125.16 L96.19 124.54 L95.58 123.86 L95.38 123.17 L95.58 122.47 M122.18 126.03 L121.58 126.94 L120.59 127.81 L119.25 128.60 L117.60 129.29 L115.69 129.87 L113.57 130.31 L111.31 130.62 L108.99 130.79 L106.66 130.81 L104.41 130.70 L102.29 130.45 L100.38 130.08 L98.73 129.60 L97.39 129.03 L96.41 128.40 L95.80 127.71 L95.60 127.00" fill="none" stroke="#666666" stroke-width="2.4" stroke-linecap="round"/><path d="M92.90 81.00 L93.12 80.46 M121.89 83.70 L121.24 84.46 L120.17 85.18 L118.72 85.84 L116.93 86.42 L114.86 86.90 L112.57 87.28 L110.13 87.55 L107.61 87.71 L105.10 87.74 L102.66 87.67 L100.37 87.49 L98.30 87.21 L96.51 86.84 L95.06 86.41 L94.00 85.92 L93.34 85.39 L93.12 84.83 L93.35 84.28 M121.92 87.55 L121.27 88.33 L120.21 89.06 L118.77 89.73 L116.99 90.32 L114.94 90.81 L112.66 91.20 L110.24 91.47 L107.74 91.62 L105.24 91.66 L102.81 91.58 L100.54 91.39 L98.49 91.11 L96.71 90.73 L95.28 90.28 L94.22 89.78 L93.57 89.23 L93.35 88.67 L93.57 88.10 M121.95 91.40 L121.30 92.19 L120.25 92.93 L118.82 93.62 L117.05 94.21 L115.01 94.72 L112.75 95.11 L110.34 95.38 L107.86 95.54 L105.38 95.57 L102.97 95.49 L100.72 95.30 L98.68 95.00 L96.92 94.62 L95.49 94.16 L94.44 93.64 L93.79 93.08 L93.58 92.50 L93.79 91.92 M121.97 95.24 L121.33 96.05 L120.28 96.81 L118.86 97.50 L117.11 98.11 L115.09 98.62 L112.84 99.02 L110.45 99.30 L107.99 99.46 L105.52 99.49 L103.13 99.40 L100.89 99.20 L98.87 98.90 L97.12 98.51 L95.70 98.03 L94.65 97.50 L94.01 96.93 L93.80 96.33 L94.02 95.74 M122.00 99.09 L121.36 99.91 L120.32 100.68 L118.91 101.39 L117.17 102.01 L115.16 102.53 L112.93 102.93 L110.56 103.21 L108.11 103.37 L105.66 103.40 L103.29 103.31 L101.07 103.11 L99.05 102.80 L97.32 102.39 L95.91 101.91 L94.87 101.36 L94.24 100.78 L94.02 100.17 L94.24 99.56 M122.03 102.94 L121.39 103.77 L120.36 104.56 L118.96 105.28 L117.23 105.91 L115.24 106.43 L113.02 106.84 L110.67 107.13 L108.24 107.29 L105.81 107.32 L103.45 107.23 L101.24 107.01 L99.24 106.69 L97.52 106.28 L96.12 105.78 L95.09 105.23 L94.46 104.63 L94.25 104.00 M122.05 106.79 L121.42 107.63 L120.40 108.43 L119.01 109.16 L117.30 109.80 L115.31 110.34 L113.11 110.75 L110.77 111.05 L108.36 111.21 L105.95 111.24 L103.61 111.14 L101.42 110.92 L99.43 110.59 L97.72 110.17 L96.33 109.66 L95.31 109.09 L94.69 108.47 L94.48 107.83 L94.69 107.19 M122.08 110.64 L121.46 111.50 L120.44 112.31 L119.06 113.05 L117.36 113.70 L115.39 114.24 L113.21 114.67 L110.88 114.96 L108.49 115.12 L106.09 115.15 L103.77 115.05 L101.59 114.82 L99.62 114.49 L97.92 114.05 L96.55 113.53 L95.53 112.95 L94.91 112.32 L94.70 111.67 M122.31 113.58 L122.11 114.48 L121.49 115.36 L120.48 116.18 L119.11 116.94 L117.42 117.60 L115.46 118.15 L113.30 118.58 L110.99 118.88 L108.61 119.04 L106.23 119.07 L103.93 118.96 L101.77 118.73 L99.81 118.39 L98.13 117.94 L96.76 117.41 L95.75 116.81 L95.13 116.17 L94.92 115.50 L95.13 114.83 M122.13 118.33 L121.52 119.22 L120.52 120.06 L119.15 120.82 L117.48 121.49 L115.54 122.05 L113.39 122.49 L111.10 122.79 L108.74 122.96 L106.38 122.98 L104.09 122.87 L101.94 122.64 L100.00 122.28 L98.33 121.83 L96.97 121.28 L95.97 120.67 L95.36 120.02 L95.15 119.33 M122.36 121.25 L122.16 122.18 L121.55 123.08 L120.55 123.93 L119.20 124.71 L117.54 125.39 L115.61 125.96 L113.48 126.40 L111.21 126.71 L108.86 126.87 L106.52 126.90 L104.25 126.78 L102.12 126.54 L100.19 126.18 L98.53 125.71 L97.18 125.16 L96.19 124.54 L95.58 123.86 L95.38 123.17 L95.58 122.47 M122.18 126.03 L121.58 126.94 L120.59 127.81 L119.25 128.60 L117.60 129.29 L115.69 129.87 L113.57 130.31 L111.31 130.62 L108.99 130.79 L106.66 130.81 L104.41 130.70 L102.29 130.45 L100.38 130.08 L98.73 129.60 L97.39 129.03 L96.41 128.40 L95.80 127.71 L95.60 127.00" fill="none" stroke="url(#gf)" stroke-width="1.20" stroke-linecap="round" transform="translate(0 -0.35)"/><path d="M134.43 105.56 L135.09 104.65 L136.18 103.81 L137.66 103.05 L139.49 102.41 L141.60 101.90 L143.94 101.55 L146.43 101.37 L149.00 101.37 L151.57 101.54 L154.06 101.89 L156.40 102.41 L158.51 103.09 L160.33 103.90 L161.81 104.83 L162.90 105.85 L163.57 106.93 L163.79 108.05 L163.57 109.16 M134.44 108.65 L135.11 107.73 L136.20 106.88 L137.68 106.12 L139.50 105.48 L141.61 104.97 L143.95 104.62 L146.43 104.43 L149.00 104.43 L151.57 104.60 L154.05 104.96 L156.39 105.48 L158.50 106.16 L160.32 106.98 L161.79 107.91 L162.88 108.93 L163.55 110.02 L163.77 111.14 L163.55 112.25 M134.46 111.73 L135.13 110.82 L136.22 109.96 L137.69 109.20 L139.51 108.55 L141.62 108.04 L143.95 107.68 L146.44 107.50 L149.00 107.49 L151.56 107.67 L154.05 108.02 L156.38 108.55 L158.49 109.23 L160.30 110.05 L161.78 110.99 L162.87 112.01 L163.53 113.11 L163.75 114.23 L163.53 115.35 M134.48 114.82 L135.14 113.90 L136.23 113.04 L137.71 112.27 L139.52 111.62 L141.63 111.10 L143.96 110.75 L146.44 110.56 L149.00 110.56 L151.56 110.73 L154.04 111.09 L156.37 111.61 L158.47 112.30 L160.29 113.12 L161.76 114.06 L162.85 115.10 L163.51 116.19 L163.74 117.32 L163.51 118.45 M134.50 117.91 L135.16 116.98 L136.25 116.12 L137.72 115.34 L139.54 114.69 L141.64 114.17 L143.96 113.81 L146.44 113.63 L149.00 113.62 L151.56 113.80 L154.04 114.15 L156.36 114.68 L158.46 115.37 L160.28 116.20 L161.75 117.14 L162.83 118.18 L163.50 119.28 L163.72 120.41 L163.49 121.54 M134.51 120.99 L135.18 120.06 L136.26 119.19 L137.73 118.42 L139.55 117.76 L141.65 117.24 L143.97 116.88 L146.45 116.69 L149.00 116.68 L151.55 116.86 L154.03 117.22 L156.35 117.75 L158.45 118.44 L160.26 119.27 L161.73 120.22 L162.81 121.26 L163.48 122.36 L163.70 123.50 L163.48 124.64 M134.53 124.08 L135.20 123.14 L136.28 122.27 L137.75 121.49 L139.56 120.83 L141.66 120.31 L143.98 119.94 L146.45 119.75 L149.00 119.75 L151.55 119.93 L154.02 120.28 L156.34 120.82 L158.44 121.51 L160.25 122.34 L161.72 123.30 L162.80 124.34 L163.46 125.45 L163.68 126.59 L163.46 127.73 M134.55 127.16 L135.21 126.22 L136.29 125.35 L137.76 124.56 L139.57 123.90 L141.67 123.37 L143.98 123.01 L146.45 122.82 L149.00 122.81 L151.55 122.99 L154.02 123.35 L156.33 123.88 L158.43 124.58 L160.23 125.42 L161.70 126.37 L162.78 127.42 L163.44 128.54 L163.66 129.68 L163.44 130.83 M134.57 130.25 L135.23 129.31 L136.31 128.42 L137.78 127.64 L139.58 126.97 L141.67 126.44 L143.99 126.07 L146.46 125.88 L149.00 125.88 L151.54 126.05 L154.01 126.41 L156.32 126.95 L158.42 127.65 L160.22 128.49 L161.68 129.45 L162.76 130.50 L163.42 131.62 L163.65 132.77 L163.42 133.92 M134.59 133.34 L135.25 132.39 L136.33 131.50 L137.79 130.71 L139.59 130.04 L141.68 129.51 L144.00 129.14 L146.46 128.95 L149.00 128.94 L151.54 129.12 L154.00 129.48 L156.32 130.02 L158.40 130.72 L160.21 131.56 L161.67 132.53 L162.75 133.59 L163.41 134.71 L163.63 135.86 L163.40 137.02 M134.60 136.42 L135.26 135.47 L136.34 134.58 L137.80 133.78 L139.61 133.11 L141.69 132.57 L144.00 132.20 L146.46 132.01 L149.00 132.00 L151.54 132.18 L154.00 132.55 L156.31 133.09 L158.39 133.79 L160.19 134.64 L161.65 135.60 L162.73 136.67 L163.39 137.79 L163.61 138.95 L163.39 140.11" fill="none" stroke="#747474" stroke-width="2.9" stroke-linecap="round"/><path d="M134.43 105.56 L135.09 104.65 L136.18 103.81 L137.66 103.05 L139.49 102.41 L141.60 101.90 L143.94 101.55 L146.43 101.37 L149.00 101.37 L151.57 101.54 L154.06 101.89 L156.40 102.41 L158.51 103.09 L160.33 103.90 L161.81 104.83 L162.90 105.85 L163.57 106.93 L163.79 108.05 L163.57 109.16 M134.44 108.65 L135.11 107.73 L136.20 106.88 L137.68 106.12 L139.50 105.48 L141.61 104.97 L143.95 104.62 L146.43 104.43 L149.00 104.43 L151.57 104.60 L154.05 104.96 L156.39 105.48 L158.50 106.16 L160.32 106.98 L161.79 107.91 L162.88 108.93 L163.55 110.02 L163.77 111.14 L163.55 112.25 M134.46 111.73 L135.13 110.82 L136.22 109.96 L137.69 109.20 L139.51 108.55 L141.62 108.04 L143.95 107.68 L146.44 107.50 L149.00 107.49 L151.56 107.67 L154.05 108.02 L156.38 108.55 L158.49 109.23 L160.30 110.05 L161.78 110.99 L162.87 112.01 L163.53 113.11 L163.75 114.23 L163.53 115.35 M134.48 114.82 L135.14 113.90 L136.23 113.04 L137.71 112.27 L139.52 111.62 L141.63 111.10 L143.96 110.75 L146.44 110.56 L149.00 110.56 L151.56 110.73 L154.04 111.09 L156.37 111.61 L158.47 112.30 L160.29 113.12 L161.76 114.06 L162.85 115.10 L163.51 116.19 L163.74 117.32 L163.51 118.45 M134.50 117.91 L135.16 116.98 L136.25 116.12 L137.72 115.34 L139.54 114.69 L141.64 114.17 L143.96 113.81 L146.44 113.63 L149.00 113.62 L151.56 113.80 L154.04 114.15 L156.36 114.68 L158.46 115.37 L160.28 116.20 L161.75 117.14 L162.83 118.18 L163.50 119.28 L163.72 120.41 L163.49 121.54 M134.51 120.99 L135.18 120.06 L136.26 119.19 L137.73 118.42 L139.55 117.76 L141.65 117.24 L143.97 116.88 L146.45 116.69 L149.00 116.68 L151.55 116.86 L154.03 117.22 L156.35 117.75 L158.45 118.44 L160.26 119.27 L161.73 120.22 L162.81 121.26 L163.48 122.36 L163.70 123.50 L163.48 124.64 M134.53 124.08 L135.20 123.14 L136.28 122.27 L137.75 121.49 L139.56 120.83 L141.66 120.31 L143.98 119.94 L146.45 119.75 L149.00 119.75 L151.55 119.93 L154.02 120.28 L156.34 120.82 L158.44 121.51 L160.25 122.34 L161.72 123.30 L162.80 124.34 L163.46 125.45 L163.68 126.59 L163.46 127.73 M134.55 127.16 L135.21 126.22 L136.29 125.35 L137.76 124.56 L139.57 123.90 L141.67 123.37 L143.98 123.01 L146.45 122.82 L149.00 122.81 L151.55 122.99 L154.02 123.35 L156.33 123.88 L158.43 124.58 L160.23 125.42 L161.70 126.37 L162.78 127.42 L163.44 128.54 L163.66 129.68 L163.44 130.83 M134.57 130.25 L135.23 129.31 L136.31 128.42 L137.78 127.64 L139.58 126.97 L141.67 126.44 L143.99 126.07 L146.46 125.88 L149.00 125.88 L151.54 126.05 L154.01 126.41 L156.32 126.95 L158.42 127.65 L160.22 128.49 L161.68 129.45 L162.76 130.50 L163.42 131.62 L163.65 132.77 L163.42 133.92 M134.59 133.34 L135.25 132.39 L136.33 131.50 L137.79 130.71 L139.59 130.04 L141.68 129.51 L144.00 129.14 L146.46 128.95 L149.00 128.94 L151.54 129.12 L154.00 129.48 L156.32 130.02 L158.40 130.72 L160.21 131.56 L161.67 132.53 L162.75 133.59 L163.41 134.71 L163.63 135.86 L163.40 137.02 M134.60 136.42 L135.26 135.47 L136.34 134.58 L137.80 133.78 L139.61 133.11 L141.69 132.57 L144.00 132.20 L146.46 132.01 L149.00 132.00 L151.54 132.18 L154.00 132.55 L156.31 133.09 L158.39 133.79 L160.19 134.64 L161.65 135.60 L162.73 136.67 L163.39 137.79 L163.61 138.95 L163.39 140.11" fill="none" stroke="url(#gb)" stroke-width="1.45" stroke-linecap="round" transform="translate(0 -0.3)"/><path d="M134.20 106.50 L134.43 105.56 M163.57 109.16 L162.90 110.24 L161.81 111.26 L160.33 112.19 L158.51 113.01 L156.39 113.69 L154.06 114.21 L151.57 114.56 L149.00 114.74 L146.43 114.74 L143.94 114.55 L141.61 114.20 L139.50 113.70 L137.67 113.06 L136.20 112.30 L135.11 111.45 L134.44 110.53 L134.22 109.59 L134.44 108.65 M163.55 112.25 L162.88 113.34 L161.79 114.37 L160.32 115.30 L158.49 116.12 L156.38 116.80 L154.05 117.32 L151.56 117.68 L149.00 117.86 L146.44 117.85 L143.95 117.67 L141.62 117.32 L139.51 116.81 L137.69 116.16 L136.21 115.40 L135.13 114.55 L134.46 113.63 L134.24 112.68 L134.46 111.73 M163.53 115.35 L162.86 116.44 L161.78 117.47 L160.30 118.41 L158.48 119.23 L156.38 119.91 L154.05 120.44 L151.56 120.80 L149.00 120.97 L146.44 120.97 L143.96 120.79 L141.63 120.43 L139.52 119.92 L137.70 119.27 L136.23 118.50 L135.14 117.65 L134.48 116.73 L134.25 115.77 L134.48 114.82 M163.51 118.45 L162.85 119.54 L161.76 120.57 L160.29 121.52 L158.47 122.34 L156.37 123.03 L154.04 123.56 L151.56 123.92 L149.00 124.09 L146.44 124.09 L143.96 123.90 L141.63 123.55 L139.53 123.03 L137.72 122.38 L136.24 121.61 L135.16 120.75 L134.50 119.82 L134.27 118.86 L134.50 117.91 M163.49 121.54 L162.83 122.64 L161.75 123.68 L160.27 124.63 L158.46 125.45 L156.36 126.14 L154.03 126.67 L151.56 127.03 L149.00 127.21 L146.45 127.21 L143.97 127.02 L141.64 126.66 L139.54 126.15 L137.73 125.49 L136.26 124.71 L135.18 123.85 L134.51 122.92 L134.29 121.95 L134.51 120.99 M163.48 124.64 L162.81 125.74 L161.73 126.78 L160.26 127.73 L158.45 128.57 L156.35 129.26 L154.03 129.79 L151.55 130.15 L149.00 130.33 L146.45 130.32 L143.97 130.14 L141.65 129.78 L139.56 129.26 L137.74 128.60 L136.28 127.82 L135.19 126.95 L134.53 126.01 L134.31 125.05 L134.53 124.08 M163.46 127.73 L162.80 128.84 L161.71 129.89 L160.25 130.84 L158.44 131.68 L156.34 132.37 L154.02 132.91 L151.55 133.27 L149.00 133.45 L146.45 133.44 L143.98 133.25 L141.66 132.89 L139.57 132.37 L137.76 131.71 L136.29 130.92 L135.21 130.05 L134.55 129.11 L134.33 128.14 L134.55 127.16 M163.44 130.83 L162.78 131.94 L161.70 132.99 L160.23 133.95 L158.42 134.79 L156.33 135.49 L154.01 136.02 L151.55 136.39 L149.00 136.57 L146.45 136.56 L143.99 136.37 L141.67 136.01 L139.58 135.48 L137.77 134.81 L136.31 134.03 L135.23 133.15 L134.57 132.20 L134.35 131.23 L134.57 130.25 M163.42 133.92 L162.76 135.04 L161.68 136.10 L160.22 137.06 L158.41 137.90 L156.32 138.60 L154.01 139.14 L151.54 139.50 L149.00 139.68 L146.46 139.68 L143.99 139.49 L141.68 139.12 L139.59 138.59 L137.79 137.92 L136.32 137.13 L135.25 136.25 L134.59 135.30 L134.36 134.32 L134.59 133.34 M163.40 137.02 L162.74 138.14 L161.67 139.20 L160.20 140.17 L158.40 141.01 L156.31 141.72 L154.00 142.26 L151.54 142.62 L149.00 142.80 L146.46 142.80 L144.00 142.60 L141.69 142.24 L139.60 141.71 L137.80 141.03 L136.34 140.24 L135.26 139.35 L134.60 138.39 L134.38 137.41 L134.60 136.42 M163.39 140.11 L162.73 141.24 L161.65 142.31 L160.19 143.28 L158.39 144.13 L156.30 144.83 L154.00 145.37 L151.54 145.74 L149.00 145.92 L146.46 145.91 L144.01 145.72 L141.70 145.35 L139.61 144.82 L137.81 144.14 L136.35 143.34 L135.28 142.45 L134.62 141.49 L134.40 140.50" fill="none" stroke="#666666" stroke-width="2.9" stroke-linecap="round"/><path d="M134.20 106.50 L134.43 105.56 M163.57 109.16 L162.90 110.24 L161.81 111.26 L160.33 112.19 L158.51 113.01 L156.39 113.69 L154.06 114.21 L151.57 114.56 L149.00 114.74 L146.43 114.74 L143.94 114.55 L141.61 114.20 L139.50 113.70 L137.67 113.06 L136.20 112.30 L135.11 111.45 L134.44 110.53 L134.22 109.59 L134.44 108.65 M163.55 112.25 L162.88 113.34 L161.79 114.37 L160.32 115.30 L158.49 116.12 L156.38 116.80 L154.05 117.32 L151.56 117.68 L149.00 117.86 L146.44 117.85 L143.95 117.67 L141.62 117.32 L139.51 116.81 L137.69 116.16 L136.21 115.40 L135.13 114.55 L134.46 113.63 L134.24 112.68 L134.46 111.73 M163.53 115.35 L162.86 116.44 L161.78 117.47 L160.30 118.41 L158.48 119.23 L156.38 119.91 L154.05 120.44 L151.56 120.80 L149.00 120.97 L146.44 120.97 L143.96 120.79 L141.63 120.43 L139.52 119.92 L137.70 119.27 L136.23 118.50 L135.14 117.65 L134.48 116.73 L134.25 115.77 L134.48 114.82 M163.51 118.45 L162.85 119.54 L161.76 120.57 L160.29 121.52 L158.47 122.34 L156.37 123.03 L154.04 123.56 L151.56 123.92 L149.00 124.09 L146.44 124.09 L143.96 123.90 L141.63 123.55 L139.53 123.03 L137.72 122.38 L136.24 121.61 L135.16 120.75 L134.50 119.82 L134.27 118.86 L134.50 117.91 M163.49 121.54 L162.83 122.64 L161.75 123.68 L160.27 124.63 L158.46 125.45 L156.36 126.14 L154.03 126.67 L151.56 127.03 L149.00 127.21 L146.45 127.21 L143.97 127.02 L141.64 126.66 L139.54 126.15 L137.73 125.49 L136.26 124.71 L135.18 123.85 L134.51 122.92 L134.29 121.95 L134.51 120.99 M163.48 124.64 L162.81 125.74 L161.73 126.78 L160.26 127.73 L158.45 128.57 L156.35 129.26 L154.03 129.79 L151.55 130.15 L149.00 130.33 L146.45 130.32 L143.97 130.14 L141.65 129.78 L139.56 129.26 L137.74 128.60 L136.28 127.82 L135.19 126.95 L134.53 126.01 L134.31 125.05 L134.53 124.08 M163.46 127.73 L162.80 128.84 L161.71 129.89 L160.25 130.84 L158.44 131.68 L156.34 132.37 L154.02 132.91 L151.55 133.27 L149.00 133.45 L146.45 133.44 L143.98 133.25 L141.66 132.89 L139.57 132.37 L137.76 131.71 L136.29 130.92 L135.21 130.05 L134.55 129.11 L134.33 128.14 L134.55 127.16 M163.44 130.83 L162.78 131.94 L161.70 132.99 L160.23 133.95 L158.42 134.79 L156.33 135.49 L154.01 136.02 L151.55 136.39 L149.00 136.57 L146.45 136.56 L143.99 136.37 L141.67 136.01 L139.58 135.48 L137.77 134.81 L136.31 134.03 L135.23 133.15 L134.57 132.20 L134.35 131.23 L134.57 130.25 M163.42 133.92 L162.76 135.04 L161.68 136.10 L160.22 137.06 L158.41 137.90 L156.32 138.60 L154.01 139.14 L151.54 139.50 L149.00 139.68 L146.46 139.68 L143.99 139.49 L141.68 139.12 L139.59 138.59 L137.79 137.92 L136.32 137.13 L135.25 136.25 L134.59 135.30 L134.36 134.32 L134.59 133.34 M163.40 137.02 L162.74 138.14 L161.67 139.20 L160.20 140.17 L158.40 141.01 L156.31 141.72 L154.00 142.26 L151.54 142.62 L149.00 142.80 L146.46 142.80 L144.00 142.60 L141.69 142.24 L139.60 141.71 L137.80 141.03 L136.34 140.24 L135.26 139.35 L134.60 138.39 L134.38 137.41 L134.60 136.42 M163.39 140.11 L162.73 141.24 L161.65 142.31 L160.19 143.28 L158.39 144.13 L156.30 144.83 L154.00 145.37 L151.54 145.74 L149.00 145.92 L146.46 145.91 L144.01 145.72 L141.70 145.35 L139.61 144.82 L137.81 144.14 L136.35 143.34 L135.28 142.45 L134.62 141.49 L134.40 140.50" fill="none" stroke="url(#gf)" stroke-width="1.45" stroke-linecap="round" transform="translate(0 -0.35)"/><path d="M180.35 126.75 L181.09 125.55 L182.31 124.42 L183.96 123.41 L186.00 122.55 L188.37 121.86 L190.98 121.37 L193.77 121.11 L196.65 121.06 L199.52 121.25 L202.31 121.67 L204.92 122.30 L207.29 123.14 L209.33 124.15 L210.98 125.31 L212.19 126.59 L212.94 127.94 L213.18 129.34 L212.92 130.74 M180.15 129.43 L180.89 128.22 L182.10 127.09 L183.76 126.08 L185.79 125.21 L188.16 124.52 L190.77 124.03 L193.55 123.76 L196.43 123.72 L199.30 123.91 L202.08 124.33 L204.70 124.96 L207.06 125.80 L209.09 126.82 L210.74 127.98 L211.96 129.26 L212.70 130.62 L212.95 132.02 L212.69 133.42 M179.95 132.11 L180.69 130.89 L181.90 129.76 L183.55 128.74 L185.59 127.87 L187.95 127.18 L190.56 126.69 L193.34 126.42 L196.21 126.37 L199.08 126.56 L201.86 126.98 L204.47 127.62 L206.83 128.46 L208.86 129.48 L210.51 130.65 L211.72 131.93 L212.46 133.30 L212.71 134.70 L212.45 136.11 M179.75 134.79 L180.49 133.57 L181.70 132.43 L183.35 131.40 L185.38 130.53 L187.74 129.84 L190.35 129.34 L193.12 129.07 L195.99 129.03 L198.86 129.22 L201.64 129.64 L204.24 130.28 L206.60 131.12 L208.63 132.14 L210.28 133.32 L211.49 134.61 L212.23 135.98 L212.47 137.39 L212.21 138.80 M179.55 137.46 L180.29 136.24 L181.50 135.10 L183.14 134.07 L185.18 133.19 L187.53 132.49 L190.13 132.00 L192.91 131.73 L195.77 131.68 L198.64 131.87 L201.41 132.29 L204.02 132.94 L206.37 133.78 L208.40 134.81 L210.04 135.98 L211.25 137.28 L211.99 138.65 L212.24 140.07 L211.98 141.48 M179.35 140.14 L180.08 138.91 L181.29 137.76 L182.94 136.73 L184.97 135.85 L187.32 135.15 L189.92 134.66 L192.69 134.38 L195.55 134.34 L198.41 134.53 L201.19 134.95 L203.79 135.60 L206.14 136.44 L208.17 137.47 L209.81 138.65 L211.02 139.95 L211.76 141.33 L212.00 142.75 L211.74 144.17 M179.14 142.82 L179.88 141.58 L181.09 140.43 L182.74 139.40 L184.76 138.51 L187.11 137.81 L189.71 137.31 L192.48 137.04 L195.34 136.99 L198.19 137.18 L200.96 137.61 L203.56 138.25 L205.91 139.10 L207.93 140.14 L209.57 141.32 L210.78 142.62 L211.52 144.01 L211.76 145.43 L211.51 146.86 M178.94 145.49 L179.68 144.26 L180.89 143.10 L182.53 142.06 L184.56 141.17 L186.90 140.47 L189.50 139.97 L192.26 139.69 L195.12 139.65 L197.97 139.84 L200.74 140.26 L203.33 140.91 L205.68 141.77 L207.70 142.80 L209.34 143.99 L210.55 145.30 L211.28 146.68 L211.53 148.11 L211.27 149.54 M178.74 148.17 L179.48 146.93 L180.69 145.77 L182.33 144.73 L184.35 143.84 L186.69 143.13 L189.29 142.62 L192.05 142.35 L194.90 142.30 L197.75 142.49 L200.51 142.92 L203.11 143.57 L205.45 144.43 L207.47 145.47 L209.11 146.66 L210.31 147.97 L211.05 149.36 L211.29 150.80 L211.03 152.23 M178.54 150.85 L179.28 149.60 L180.49 148.44 L182.12 147.39 L184.14 146.50 L186.48 145.79 L189.07 145.28 L191.83 145.00 L194.68 144.95 L197.53 145.15 L200.29 145.58 L202.88 146.23 L205.22 147.09 L207.24 148.13 L208.87 149.33 L210.08 150.64 L210.81 152.04 L211.05 153.48 L210.80 154.92 M178.34 153.53 L179.08 152.27 L180.28 151.10 L181.92 150.05 L183.94 149.16 L186.27 148.44 L188.86 147.94 L191.62 147.66 L194.46 147.61 L197.31 147.80 L200.06 148.23 L202.65 148.89 L204.99 149.75 L207.00 150.79 L208.64 151.99 L209.84 153.31 L210.58 154.72 L210.82 156.16 L210.56 157.60" fill="none" stroke="#747474" stroke-width="3.0" stroke-linecap="round"/><path d="M180.35 126.75 L181.09 125.55 L182.31 124.42 L183.96 123.41 L186.00 122.55 L188.37 121.86 L190.98 121.37 L193.77 121.11 L196.65 121.06 L199.52 121.25 L202.31 121.67 L204.92 122.30 L207.29 123.14 L209.33 124.15 L210.98 125.31 L212.19 126.59 L212.94 127.94 L213.18 129.34 L212.92 130.74 M180.15 129.43 L180.89 128.22 L182.10 127.09 L183.76 126.08 L185.79 125.21 L188.16 124.52 L190.77 124.03 L193.55 123.76 L196.43 123.72 L199.30 123.91 L202.08 124.33 L204.70 124.96 L207.06 125.80 L209.09 126.82 L210.74 127.98 L211.96 129.26 L212.70 130.62 L212.95 132.02 L212.69 133.42 M179.95 132.11 L180.69 130.89 L181.90 129.76 L183.55 128.74 L185.59 127.87 L187.95 127.18 L190.56 126.69 L193.34 126.42 L196.21 126.37 L199.08 126.56 L201.86 126.98 L204.47 127.62 L206.83 128.46 L208.86 129.48 L210.51 130.65 L211.72 131.93 L212.46 133.30 L212.71 134.70 L212.45 136.11 M179.75 134.79 L180.49 133.57 L181.70 132.43 L183.35 131.40 L185.38 130.53 L187.74 129.84 L190.35 129.34 L193.12 129.07 L195.99 129.03 L198.86 129.22 L201.64 129.64 L204.24 130.28 L206.60 131.12 L208.63 132.14 L210.28 133.32 L211.49 134.61 L212.23 135.98 L212.47 137.39 L212.21 138.80 M179.55 137.46 L180.29 136.24 L181.50 135.10 L183.14 134.07 L185.18 133.19 L187.53 132.49 L190.13 132.00 L192.91 131.73 L195.77 131.68 L198.64 131.87 L201.41 132.29 L204.02 132.94 L206.37 133.78 L208.40 134.81 L210.04 135.98 L211.25 137.28 L211.99 138.65 L212.24 140.07 L211.98 141.48 M179.35 140.14 L180.08 138.91 L181.29 137.76 L182.94 136.73 L184.97 135.85 L187.32 135.15 L189.92 134.66 L192.69 134.38 L195.55 134.34 L198.41 134.53 L201.19 134.95 L203.79 135.60 L206.14 136.44 L208.17 137.47 L209.81 138.65 L211.02 139.95 L211.76 141.33 L212.00 142.75 L211.74 144.17 M179.14 142.82 L179.88 141.58 L181.09 140.43 L182.74 139.40 L184.76 138.51 L187.11 137.81 L189.71 137.31 L192.48 137.04 L195.34 136.99 L198.19 137.18 L200.96 137.61 L203.56 138.25 L205.91 139.10 L207.93 140.14 L209.57 141.32 L210.78 142.62 L211.52 144.01 L211.76 145.43 L211.51 146.86 M178.94 145.49 L179.68 144.26 L180.89 143.10 L182.53 142.06 L184.56 141.17 L186.90 140.47 L189.50 139.97 L192.26 139.69 L195.12 139.65 L197.97 139.84 L200.74 140.26 L203.33 140.91 L205.68 141.77 L207.70 142.80 L209.34 143.99 L210.55 145.30 L211.28 146.68 L211.53 148.11 L211.27 149.54 M178.74 148.17 L179.48 146.93 L180.69 145.77 L182.33 144.73 L184.35 143.84 L186.69 143.13 L189.29 142.62 L192.05 142.35 L194.90 142.30 L197.75 142.49 L200.51 142.92 L203.11 143.57 L205.45 144.43 L207.47 145.47 L209.11 146.66 L210.31 147.97 L211.05 149.36 L211.29 150.80 L211.03 152.23 M178.54 150.85 L179.28 149.60 L180.49 148.44 L182.12 147.39 L184.14 146.50 L186.48 145.79 L189.07 145.28 L191.83 145.00 L194.68 144.95 L197.53 145.15 L200.29 145.58 L202.88 146.23 L205.22 147.09 L207.24 148.13 L208.87 149.33 L210.08 150.64 L210.81 152.04 L211.05 153.48 L210.80 154.92 M178.34 153.53 L179.08 152.27 L180.28 151.10 L181.92 150.05 L183.94 149.16 L186.27 148.44 L188.86 147.94 L191.62 147.66 L194.46 147.61 L197.31 147.80 L200.06 148.23 L202.65 148.89 L204.99 149.75 L207.00 150.79 L208.64 151.99 L209.84 153.31 L210.58 154.72 L210.82 156.16 L210.56 157.60" fill="none" stroke="url(#gb)" stroke-width="1.50" stroke-linecap="round" transform="translate(0 -0.3)"/><path d="M180.10 128.00 L180.35 126.75 M212.92 130.74 L212.17 132.09 L210.94 133.37 L209.27 134.53 L207.22 135.55 L204.85 136.39 L202.22 137.02 L199.42 137.44 L196.54 137.63 L193.65 137.59 L190.85 137.32 L188.23 136.84 L185.85 136.15 L183.80 135.28 L182.14 134.27 L180.91 133.14 L180.16 131.93 L179.90 130.68 L180.15 129.43 M212.69 133.42 L211.93 134.79 L210.71 136.07 L209.04 137.23 L206.99 138.25 L204.62 139.09 L202.00 139.73 L199.20 140.15 L196.32 140.34 L193.44 140.30 L190.64 140.03 L188.02 139.54 L185.65 138.85 L183.60 137.98 L181.94 136.97 L180.71 135.83 L179.96 134.62 L179.70 133.36 L179.95 132.11 M212.45 136.11 L211.70 137.48 L210.47 138.76 L208.81 139.93 L206.76 140.95 L204.39 141.80 L201.77 142.44 L198.98 142.86 L196.10 143.05 L193.22 143.01 L190.43 142.74 L187.81 142.25 L185.44 141.55 L183.39 140.68 L181.73 139.66 L180.51 138.52 L179.76 137.30 L179.50 136.05 L179.75 134.79 M212.21 138.80 L211.46 140.17 L210.24 141.46 L208.58 142.63 L206.53 143.66 L204.17 144.50 L201.55 145.14 L198.76 145.57 L195.88 145.76 L193.01 145.72 L190.22 145.45 L187.60 144.95 L185.23 144.26 L183.19 143.38 L181.53 142.36 L180.31 141.21 L179.56 139.99 L179.30 138.73 L179.55 137.46 M211.98 141.48 L211.23 142.86 L210.00 144.15 L208.35 145.33 L206.30 146.36 L203.94 147.21 L201.32 147.85 L198.54 148.28 L195.66 148.47 L192.79 148.43 L190.00 148.15 L187.39 147.66 L185.03 146.96 L182.99 146.08 L181.33 145.05 L180.11 143.91 L179.36 142.68 L179.10 141.41 L179.35 140.14 M211.74 144.17 L210.99 145.55 L209.77 146.85 L208.11 148.03 L206.07 149.06 L203.71 149.91 L201.10 150.56 L198.32 150.98 L195.45 151.18 L192.58 151.13 L189.79 150.86 L187.18 150.36 L184.82 149.66 L182.78 148.78 L181.13 147.75 L179.91 146.60 L179.16 145.36 L178.90 144.09 L179.14 142.82 M211.51 146.86 L210.76 148.24 L209.54 149.55 L207.88 150.73 L205.84 151.76 L203.48 152.62 L200.88 153.27 L198.09 153.69 L195.23 153.89 L192.36 153.84 L189.58 153.57 L186.97 153.07 L184.61 152.37 L182.58 151.48 L180.92 150.44 L179.70 149.29 L178.96 148.05 L178.70 146.77 L178.94 145.49 M211.27 149.54 L210.52 150.93 L209.30 152.24 L207.65 153.43 L205.61 154.47 L203.26 155.32 L200.65 155.97 L197.87 156.40 L195.01 156.60 L192.15 156.55 L189.37 156.27 L186.76 155.77 L184.41 155.07 L182.37 154.18 L180.72 153.14 L179.50 151.98 L178.76 150.74 L178.50 149.45 L178.74 148.17 M211.03 152.23 L210.29 153.62 L209.07 154.94 L207.42 156.13 L205.38 157.17 L203.03 158.03 L200.43 158.68 L197.65 159.11 L194.79 159.30 L191.93 159.26 L189.16 158.98 L186.55 158.48 L184.20 157.77 L182.17 156.88 L180.52 155.83 L179.30 154.67 L178.56 153.42 L178.30 152.14 L178.54 150.85 M210.80 154.92 L210.05 156.31 L208.83 157.63 L207.19 158.83 L205.15 159.87 L202.80 160.73 L200.20 161.39 L197.43 161.82 L194.57 162.01 L191.71 161.97 L188.94 161.69 L186.34 161.19 L183.99 160.47 L181.96 159.58 L180.32 158.53 L179.10 157.36 L178.35 156.11 L178.10 154.82 L178.34 153.53 M210.56 157.60 L209.82 159.01 L208.60 160.33 L206.95 161.53 L204.92 162.58 L202.58 163.44 L199.98 164.10 L197.21 164.53 L194.35 164.72 L191.50 164.68 L188.73 164.40 L186.13 163.89 L183.79 163.18 L181.76 162.28 L180.11 161.23 L178.90 160.05 L178.15 158.80 L177.90 157.50" fill="none" stroke="#666666" stroke-width="3.0" stroke-linecap="round"/><path d="M180.10 128.00 L180.35 126.75 M212.92 130.74 L212.17 132.09 L210.94 133.37 L209.27 134.53 L207.22 135.55 L204.85 136.39 L202.22 137.02 L199.42 137.44 L196.54 137.63 L193.65 137.59 L190.85 137.32 L188.23 136.84 L185.85 136.15 L183.80 135.28 L182.14 134.27 L180.91 133.14 L180.16 131.93 L179.90 130.68 L180.15 129.43 M212.69 133.42 L211.93 134.79 L210.71 136.07 L209.04 137.23 L206.99 138.25 L204.62 139.09 L202.00 139.73 L199.20 140.15 L196.32 140.34 L193.44 140.30 L190.64 140.03 L188.02 139.54 L185.65 138.85 L183.60 137.98 L181.94 136.97 L180.71 135.83 L179.96 134.62 L179.70 133.36 L179.95 132.11 M212.45 136.11 L211.70 137.48 L210.47 138.76 L208.81 139.93 L206.76 140.95 L204.39 141.80 L201.77 142.44 L198.98 142.86 L196.10 143.05 L193.22 143.01 L190.43 142.74 L187.81 142.25 L185.44 141.55 L183.39 140.68 L181.73 139.66 L180.51 138.52 L179.76 137.30 L179.50 136.05 L179.75 134.79 M212.21 138.80 L211.46 140.17 L210.24 141.46 L208.58 142.63 L206.53 143.66 L204.17 144.50 L201.55 145.14 L198.76 145.57 L195.88 145.76 L193.01 145.72 L190.22 145.45 L187.60 144.95 L185.23 144.26 L183.19 143.38 L181.53 142.36 L180.31 141.21 L179.56 139.99 L179.30 138.73 L179.55 137.46 M211.98 141.48 L211.23 142.86 L210.00 144.15 L208.35 145.33 L206.30 146.36 L203.94 147.21 L201.32 147.85 L198.54 148.28 L195.66 148.47 L192.79 148.43 L190.00 148.15 L187.39 147.66 L185.03 146.96 L182.99 146.08 L181.33 145.05 L180.11 143.91 L179.36 142.68 L179.10 141.41 L179.35 140.14 M211.74 144.17 L210.99 145.55 L209.77 146.85 L208.11 148.03 L206.07 149.06 L203.71 149.91 L201.10 150.56 L198.32 150.98 L195.45 151.18 L192.58 151.13 L189.79 150.86 L187.18 150.36 L184.82 149.66 L182.78 148.78 L181.13 147.75 L179.91 146.60 L179.16 145.36 L178.90 144.09 L179.14 142.82 M211.51 146.86 L210.76 148.24 L209.54 149.55 L207.88 150.73 L205.84 151.76 L203.48 152.62 L200.88 153.27 L198.09 153.69 L195.23 153.89 L192.36 153.84 L189.58 153.57 L186.97 153.07 L184.61 152.37 L182.58 151.48 L180.92 150.44 L179.70 149.29 L178.96 148.05 L178.70 146.77 L178.94 145.49 M211.27 149.54 L210.52 150.93 L209.30 152.24 L207.65 153.43 L205.61 154.47 L203.26 155.32 L200.65 155.97 L197.87 156.40 L195.01 156.60 L192.15 156.55 L189.37 156.27 L186.76 155.77 L184.41 155.07 L182.37 154.18 L180.72 153.14 L179.50 151.98 L178.76 150.74 L178.50 149.45 L178.74 148.17 M211.03 152.23 L210.29 153.62 L209.07 154.94 L207.42 156.13 L205.38 157.17 L203.03 158.03 L200.43 158.68 L197.65 159.11 L194.79 159.30 L191.93 159.26 L189.16 158.98 L186.55 158.48 L184.20 157.77 L182.17 156.88 L180.52 155.83 L179.30 154.67 L178.56 153.42 L178.30 152.14 L178.54 150.85 M210.80 154.92 L210.05 156.31 L208.83 157.63 L207.19 158.83 L205.15 159.87 L202.80 160.73 L200.20 161.39 L197.43 161.82 L194.57 162.01 L191.71 161.97 L188.94 161.69 L186.34 161.19 L183.99 160.47 L181.96 159.58 L180.32 158.53 L179.10 157.36 L178.35 156.11 L178.10 154.82 L178.34 153.53 M210.56 157.60 L209.82 159.01 L208.60 160.33 L206.95 161.53 L204.92 162.58 L202.58 163.44 L199.98 164.10 L197.21 164.53 L194.35 164.72 L191.50 164.68 L188.73 164.40 L186.13 163.89 L183.79 163.18 L181.76 162.28 L180.11 161.23 L178.90 160.05 L178.15 158.80 L177.90 157.50" fill="none" stroke="url(#gf)" stroke-width="1.50" stroke-linecap="round" transform="translate(0 -0.35)"/></svg>

<div class="a" style="left:992px;top:55px;width:17px;height:683px;background:#f0f0f0"></div>
<div class="a" style="left:992px;top:620px;width:17px;height:65px;background:#a6a6a6"></div>
<svg class="chev" style="left:994px;top:60px" width="11" height="9" viewBox="0 0 11 9"><path d="M2 6.5L5.5 3L9 6.5" fill="none" stroke="#606060" stroke-width="1.9"/></svg>
<svg class="chev" style="left:994px;top:725px" width="11" height="9" viewBox="0 0 11 9"><path d="M2 3L5.5 6.5L9 3" fill="none" stroke="#606060" stroke-width="1.9"/></svg>

<div id="proto" class="a">
 <div id="ph" class="a">Berechnungsprotokoll</div>
 <div id="px" class="a">X</div>
 <div id="pt" class="a"><div>a[mm]: 2,65</div>
<div>nt[-]: 12</div>
<div>S1[mm]: 9,8159509202454</div>
<div>L1[mm]: 28,1840490797546</div>
<div>S2[mm]: 19,6319018404908</div>
<div>L2[mm]: 18,3680981595092</div>
<div>Fh[N]: 10</div>
<div>Sh[mm]: 9,8159509202454</div>
<div>C[N/mm]: 1,01875</div>
<div>-------------------------------------------</div>
<div>a1[mm]: 1,66840490797546</div>
<div>a2[mm]: 0,68680981595092</div>
<div>an[mm]: 0,25</div>
<div>ad[mm]: 0</div></div>
 <div id="psb" class="a"></div>
 <div class="a" style="left:382px;top:41px;width:15px;height:124px;background:#cdcdcd"></div>
 <svg class="chev" style="left:384px;top:29px" width="11" height="9" viewBox="0 0 11 9"><path d="M2 6L5.5 2.5L9 6" fill="none" stroke="#606060" stroke-width="1.9"/></svg>
 <svg class="chev" style="left:384px;top:185px" width="11" height="9" viewBox="0 0 11 9"><path d="M2 3L5.5 6.5L9 3" fill="none" stroke="#606060" stroke-width="1.9"/></svg>
</div>

<div id="status" class="a"></div>
<div class="a" style="left:5px;top:742px;font-size:12px;line-height:16px;color:#000;letter-spacing:-0.2px">Bereit</div>
</body></html>
